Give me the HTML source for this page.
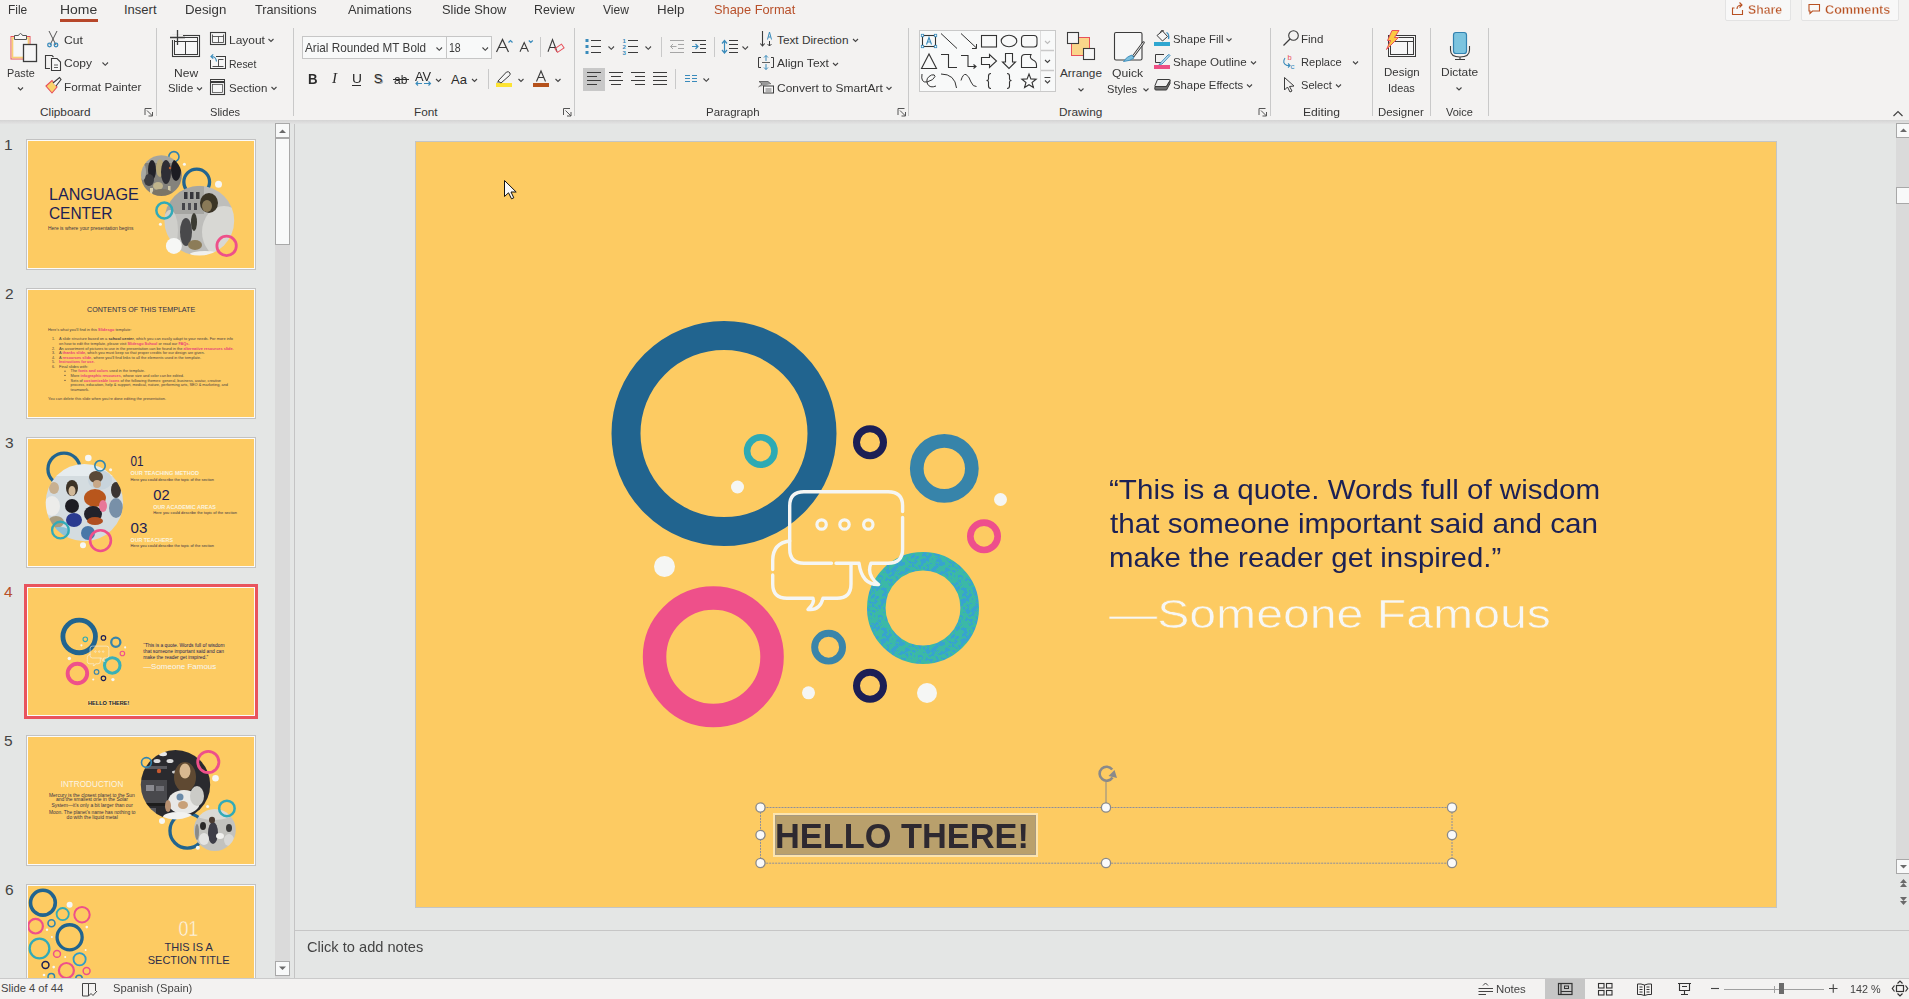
<!DOCTYPE html>
<html><head><meta charset="utf-8"><style>
html,body{margin:0;padding:0;width:1909px;height:999px;overflow:hidden;background:#f3f2f1;font-family:'Liberation Sans',sans-serif;}
.tx{position:absolute;white-space:nowrap;line-height:1;transform-origin:0 0;}
svg{overflow:visible}
</style></head><body>
<div style="position:absolute;left:0px;top:0px;width:1909px;height:120px;background:#f3f2f1;"></div>
<div style="position:absolute;left:0px;top:120px;width:1909px;height:4px;background:linear-gradient(#d4d4d4,#e3e3e3);"></div>
<div style="position:absolute;left:0px;top:124px;width:1909px;height:854px;background:#e4e6e5;"></div>
<div style="position:absolute;left:294px;top:124px;width:1px;height:854px;background:#cfcfcf;"></div>
<div style="position:absolute;left:0px;top:978px;width:1909px;height:21px;background:#f3f2f1;"></div>
<div style="position:absolute;left:0px;top:978px;width:1909px;height:1px;background:#cacaca;"></div>
<div style="position:absolute;left:295px;top:930px;width:1614px;height:1px;background:#c6c6c6;"></div>
<div id="t1" class="tx" style="transform:scaleX(1.0087);left:307.00px;top:940px;font-size:14.5px;color:#444;font-weight:normal;font-family:'Liberation Sans',sans-serif;">Click to add notes</div>
<div style="position:absolute;left:415px;top:141px;width:1362px;height:767px;background:#fdcb62;border:1px solid #c3c5c6;box-sizing:border-box;"></div>
<svg style="position:absolute;left:0px;top:0px;pointer-events:none" width="1909" height="999" viewBox="0 0 1909 999"><circle cx="724" cy="433.5" r="98.0" fill="none" stroke="#21648f" stroke-width="29.0"/><circle cx="760.8" cy="451" r="13.7" fill="none" stroke="#2eaab4" stroke-width="6.6"/><circle cx="737.5" cy="487" r="6.5" fill="#f5f6f4"/><circle cx="870" cy="442.3" r="13.5" fill="none" stroke="#1c1f55" stroke-width="7"/><circle cx="944.3" cy="468.4" r="27.549999999999997" fill="none" stroke="#3784aa" stroke-width="13.7"/><circle cx="1000.5" cy="499.5" r="6.5" fill="#f5f6f4"/><circle cx="984" cy="536.3" r="13.675" fill="none" stroke="#ee4f8c" stroke-width="6.65"/><circle cx="713.3" cy="656.8" r="58.75" fill="none" stroke="#ee508a" stroke-width="23.5"/><circle cx="664.5" cy="566.5" r="10.5" fill="#f5f6f4"/><pattern id="tealpat" patternUnits="userSpaceOnUse" width="40" height="40"><rect width="40" height="40" fill="#3bb9a6"/><path d="M0 0h9v1h-9zM16 0h6v1h-6zM27 0h1v1h-1zM34 0h3v1h-3zM1 1h5v1h-5zM8 1h1v1h-1zM16 1h6v1h-6zM28 1h3v1h-3zM35 1h3v1h-3zM1 2h5v1h-5zM15 2h1v1h-1zM19 2h6v1h-6zM29 2h8v1h-8zM1 3h3v1h-3zM10 3h2v1h-2zM16 3h2v1h-2zM19 3h6v1h-6zM30 3h1v1h-1zM32 3h1v1h-1zM34 3h2v1h-2zM1 4h2v1h-2zM7 4h1v1h-1zM9 4h1v1h-1zM15 4h10v1h-10zM32 4h2v1h-2zM0 5h3v1h-3zM6 5h3v1h-3zM16 5h2v1h-2zM19 5h4v1h-4zM29 5h1v1h-1zM32 5h2v1h-2zM38 5h2v1h-2zM0 6h1v1h-1zM7 6h2v1h-2zM14 6h5v1h-5zM28 6h3v1h-3zM32 6h3v1h-3zM38 6h2v1h-2zM0 7h1v1h-1zM3 7h2v1h-2zM8 7h1v1h-1zM13 7h5v1h-5zM26 7h1v1h-1zM35 7h2v1h-2zM39 7h1v1h-1zM0 8h1v1h-1zM3 8h2v1h-2zM7 8h2v1h-2zM12 8h5v1h-5zM25 8h4v1h-4zM36 8h2v1h-2zM39 8h1v1h-1zM4 9h1v1h-1zM6 9h3v1h-3zM11 9h5v1h-5zM25 9h5v1h-5zM5 10h5v1h-5zM11 10h6v1h-6zM18 10h1v1h-1zM25 10h6v1h-6zM32 10h3v1h-3zM37 10h1v1h-1zM6 11h8v1h-8zM15 11h1v1h-1zM17 11h1v1h-1zM21 11h2v1h-2zM24 11h4v1h-4zM32 11h4v1h-4zM3 12h2v1h-2zM6 12h4v1h-4zM12 12h3v1h-3zM20 12h6v1h-6zM34 12h1v1h-1zM7 13h2v1h-2zM12 13h3v1h-3zM17 13h1v1h-1zM19 13h6v1h-6zM26 13h2v1h-2zM30 13h2v1h-2zM11 14h3v1h-3zM18 14h4v1h-4zM25 14h3v1h-3zM30 14h2v1h-2zM0 15h2v1h-2zM8 15h6v1h-6zM26 15h3v1h-3zM31 15h1v1h-1zM34 15h1v1h-1zM38 15h2v1h-2zM0 16h3v1h-3zM9 16h2v1h-2zM15 16h2v1h-2zM27 16h1v1h-1zM34 16h1v1h-1zM38 16h2v1h-2zM2 17h1v1h-1zM6 17h1v1h-1zM16 17h2v1h-2zM21 17h1v1h-1zM27 17h1v1h-1zM38 17h1v1h-1zM2 18h1v1h-1zM6 18h2v1h-2zM16 18h2v1h-2zM21 18h5v1h-5zM31 18h1v1h-1zM1 19h1v1h-1zM5 19h8v1h-8zM17 19h2v1h-2zM23 19h3v1h-3zM38 19h1v1h-1zM0 20h1v1h-1zM5 20h2v1h-2zM9 20h4v1h-4zM16 20h3v1h-3zM22 20h2v1h-2zM37 20h1v1h-1zM39 20h1v1h-1zM0 21h1v1h-1zM10 21h2v1h-2zM14 21h5v1h-5zM22 21h2v1h-2zM38 21h2v1h-2zM0 22h1v1h-1zM11 22h1v1h-1zM15 22h3v1h-3zM21 22h3v1h-3zM36 22h2v1h-2zM8 23h1v1h-1zM11 23h2v1h-2zM16 23h2v1h-2zM21 23h3v1h-3zM31 23h3v1h-3zM35 23h4v1h-4zM1 24h1v1h-1zM9 24h4v1h-4zM17 24h1v1h-1zM21 24h3v1h-3zM33 24h5v1h-5zM0 25h1v1h-1zM9 25h2v1h-2zM20 25h2v1h-2zM23 25h3v1h-3zM30 25h3v1h-3zM34 25h2v1h-2zM38 25h1v1h-1zM19 26h6v1h-6zM29 26h4v1h-4zM34 26h2v1h-2zM38 26h2v1h-2zM3 27h1v1h-1zM12 27h3v1h-3zM18 27h6v1h-6zM25 27h1v1h-1zM32 27h8v1h-8zM1 28h6v1h-6zM12 28h3v1h-3zM18 28h2v1h-2zM21 28h2v1h-2zM24 28h1v1h-1zM26 28h1v1h-1zM32 28h3v1h-3zM36 28h4v1h-4zM1 29h5v1h-5zM13 29h3v1h-3zM17 29h1v1h-1zM23 29h7v1h-7zM32 29h1v1h-1zM36 29h3v1h-3zM3 30h4v1h-4zM9 30h1v1h-1zM13 30h6v1h-6zM23 30h3v1h-3zM28 30h3v1h-3zM32 30h2v1h-2zM36 30h2v1h-2zM4 31h3v1h-3zM9 31h2v1h-2zM13 31h8v1h-8zM23 31h2v1h-2zM27 31h4v1h-4zM32 31h1v1h-1zM34 31h1v1h-1zM4 32h4v1h-4zM13 32h1v1h-1zM15 32h6v1h-6zM28 32h4v1h-4zM34 32h1v1h-1zM3 33h4v1h-4zM9 33h2v1h-2zM14 33h7v1h-7zM29 33h2v1h-2zM2 34h4v1h-4zM9 34h3v1h-3zM14 34h6v1h-6zM23 34h2v1h-2zM29 34h2v1h-2zM33 34h2v1h-2zM2 35h5v1h-5zM8 35h4v1h-4zM15 35h5v1h-5zM23 35h3v1h-3zM32 35h3v1h-3zM2 36h1v1h-1zM5 36h6v1h-6zM18 36h2v1h-2zM24 36h1v1h-1zM31 36h4v1h-4zM36 36h3v1h-3zM6 37h4v1h-4zM15 37h4v1h-4zM27 37h1v1h-1zM31 37h3v1h-3zM36 37h3v1h-3zM3 38h2v1h-2zM6 38h3v1h-3zM12 38h1v1h-1zM18 38h3v1h-3zM27 38h1v1h-1zM31 38h1v1h-1zM35 38h3v1h-3zM1 39h8v1h-8zM12 39h1v1h-1zM16 39h5v1h-5zM26 39h1v1h-1zM35 39h1v1h-1z" fill="#37a3cf"/></pattern><circle cx="923" cy="608" r="46.7" fill="none" stroke="url(#tealpat)" stroke-width="18.6"/><circle cx="828.6" cy="647.2" r="13.95" fill="none" stroke="#3a85aa" stroke-width="6.899999999999999"/><circle cx="870" cy="685.7" r="13.5" fill="none" stroke="#1c1f55" stroke-width="7"/><circle cx="808.5" cy="692.8" r="6.5" fill="#f5f6f4"/><circle cx="927" cy="693" r="10" fill="#f5f6f4"/><path d="M789.7 541 Q773 543 772.7 560 L772.7 569.5 M772.7 575 L772.7 584 Q772.7 598.2 787 598.2 L813 598.2 Q815 603 808 609.5 Q820 611 823 598.2 L837 598.2 Q851 598.2 851 584 L851 564.8" fill="none" stroke="#f5f6f4" stroke-width="3.4" stroke-linecap="round" stroke-linejoin="round"/><path d="M831.5 563.2 L804 563.2 Q789.7 563.2 789.7 549 L789.7 505.7 Q789.7 491.7 804 491.7 L888 491.7 Q902.6 491.7 902.6 505.7 L902.6 511.5 M902.6 517.5 L902.6 549 Q902.6 563.2 888 563.2 L871 563.2 Q866 575 878.5 584.5 Q862 585 859 563.2 L836 563.2" fill="none" stroke="#f5f6f4" stroke-width="3.4" stroke-linecap="round" stroke-linejoin="round"/><circle cx="821.6" cy="524.5" r="4.7" fill="none" stroke="#f5f6f4" stroke-width="3.2"/><circle cx="844.5" cy="524.5" r="4.7" fill="none" stroke="#f5f6f4" stroke-width="3.2"/><circle cx="868.3" cy="524.5" r="4.7" fill="none" stroke="#f5f6f4" stroke-width="3.2"/></svg>
<div id="t2" class="tx" style="transform:scaleX(1.0382);left:1108.86px;top:475px;font-size:28.5px;color:#1c2155;font-weight:normal;font-family:'Liberation Sans',sans-serif;">&#8220;This is a quote. Words full of wisdom</div>
<div id="t3" class="tx" style="transform:scaleX(1.0407);left:1110.00px;top:509px;font-size:28.5px;color:#1c2155;font-weight:normal;font-family:'Liberation Sans',sans-serif;">that someone important said and can</div>
<div id="t4" class="tx" style="transform:scaleX(1.0317);left:1108.82px;top:543px;font-size:28.5px;color:#1c2155;font-weight:normal;font-family:'Liberation Sans',sans-serif;">make the reader get inspired.&#8221;</div>
<div id="t5" class="tx" style="transform:scaleX(1.1609);left:1109.00px;top:593px;font-size:41.5px;color:#f7f7f4;font-weight:normal;font-family:'Liberation Sans',sans-serif;-webkit-text-stroke:0.6px #fdcb62;">&#8212;Someone Famous</div>
<div style="position:absolute;left:773px;top:813px;width:265px;height:44px;background:#b9a06c;border:2px solid #fbe4b0;box-sizing:border-box;box-shadow:inset 0 0 0 1px #a89a80;"></div>
<div id="t6" class="tx" style="transform:scaleX(0.9960);left:775.41px;top:819px;font-size:34.5px;color:#2e2930;font-weight:bold;font-family:'Liberation Sans',sans-serif;">HELLO THERE!</div>
<svg style="position:absolute;left:0px;top:0px;pointer-events:none" width="1909" height="999" viewBox="0 0 1909 999"><rect x="760.5" y="807.5" width="691.5" height="55.7" fill="none" stroke="#8c8e9c" stroke-width="1" stroke-dasharray="2,1"/><line x1="1106" y1="780" x2="1106" y2="807" stroke="#8a8a8a" stroke-width="1"/><circle cx="760.5" cy="807.5" r="4.6" fill="#fafafa" stroke="#8a8a8a" stroke-width="1.3"/><circle cx="1106" cy="807.5" r="4.6" fill="#fafafa" stroke="#8a8a8a" stroke-width="1.3"/><circle cx="1452" cy="807.5" r="4.6" fill="#fafafa" stroke="#8a8a8a" stroke-width="1.3"/><circle cx="760.5" cy="835" r="4.6" fill="#fafafa" stroke="#8a8a8a" stroke-width="1.3"/><circle cx="1452" cy="835" r="4.6" fill="#fafafa" stroke="#8a8a8a" stroke-width="1.3"/><circle cx="760.5" cy="863" r="4.6" fill="#fafafa" stroke="#8a8a8a" stroke-width="1.3"/><circle cx="1106" cy="863" r="4.6" fill="#fafafa" stroke="#8a8a8a" stroke-width="1.3"/><circle cx="1452" cy="863" r="4.6" fill="#fafafa" stroke="#8a8a8a" stroke-width="1.3"/><path d="M1112.2 769.5 A7 7 0 1 0 1112.5 777.5" fill="none" stroke="#8a8a8a" stroke-width="2.6"/><path d="M1108.5 776 L1117 778 L1114.5 770" fill="#8a8a8a"/></svg>
<div id="t7" class="tx" style="transform:scaleX(0.9200);left:8.35px;top:3px;font-size:13px;color:#363636;font-weight:normal;font-family:'Liberation Sans',sans-serif;">File</div>
<div id="t8" class="tx" style="transform:scaleX(1.0735);left:60.26px;top:3px;font-size:13px;color:#363636;font-weight:normal;font-family:'Liberation Sans',sans-serif;">Home</div>
<div id="t9" class="tx" style="transform:scaleX(1.0000);left:124.00px;top:3px;font-size:13px;color:#363636;font-weight:normal;font-family:'Liberation Sans',sans-serif;">Insert</div>
<div id="t10" class="tx" style="transform:scaleX(1.0205);left:184.92px;top:3px;font-size:13px;color:#363636;font-weight:normal;font-family:'Liberation Sans',sans-serif;">Design</div>
<div id="t11" class="tx" style="transform:scaleX(0.9778);left:255.00px;top:3px;font-size:13px;color:#363636;font-weight:normal;font-family:'Liberation Sans',sans-serif;">Transitions</div>
<div id="t12" class="tx" style="transform:scaleX(0.9891);left:348.00px;top:3px;font-size:13px;color:#363636;font-weight:normal;font-family:'Liberation Sans',sans-serif;">Animations</div>
<div id="t13" class="tx" style="transform:scaleX(0.9891);left:441.82px;top:3px;font-size:13px;color:#363636;font-weight:normal;font-family:'Liberation Sans',sans-serif;">Slide Show</div>
<div id="t14" class="tx" style="transform:scaleX(0.9524);left:534.12px;top:3px;font-size:13px;color:#363636;font-weight:normal;font-family:'Liberation Sans',sans-serif;">Review</div>
<div id="t15" class="tx" style="transform:scaleX(0.9276);left:603.12px;top:3px;font-size:13px;color:#363636;font-weight:normal;font-family:'Liberation Sans',sans-serif;">View</div>
<div id="t16" class="tx" style="transform:scaleX(1.0269);left:657.14px;top:3px;font-size:13px;color:#363636;font-weight:normal;font-family:'Liberation Sans',sans-serif;">Help</div>
<div id="t17" class="tx" style="transform:scaleX(0.9866);left:714.40px;top:3px;font-size:13px;color:#b8502a;font-weight:normal;font-family:'Liberation Sans',sans-serif;">Shape Format</div>
<div style="position:absolute;left:60px;top:19px;width:38px;height:3px;background:#b7472a;"></div>
<div style="position:absolute;left:1725px;top:-2px;width:66px;height:23px;background:#f8f8f8;border:1px solid #e3e3e3;border-radius:2px;box-sizing:border-box;"></div>
<div style="position:absolute;left:1801px;top:-2px;width:98px;height:23px;background:#f8f8f8;border:1px solid #e3e3e3;border-radius:2px;box-sizing:border-box;"></div>
<div id="t18" class="tx" style="transform:scaleX(0.9444);left:1748.00px;top:3px;font-size:13px;color:#b85122;font-weight:bold;font-family:'Liberation Sans',sans-serif;-webkit-text-stroke:0.35px #f8f8f8;">Share</div>
<div id="t19" class="tx" style="transform:scaleX(0.9731);left:1824.52px;top:3px;font-size:13px;color:#b85122;font-weight:bold;font-family:'Liberation Sans',sans-serif;-webkit-text-stroke:0.35px #f8f8f8;">Comments</div>
<div id="t20" class="tx" style="transform:scaleX(1.0000);left:40.00px;top:107px;font-size:11.8px;color:#363636;font-weight:normal;font-family:'Liberation Sans',sans-serif;">Clipboard</div>
<div id="t21" class="tx" style="transform:scaleX(0.9375);left:210.00px;top:107px;font-size:11.8px;color:#363636;font-weight:normal;font-family:'Liberation Sans',sans-serif;">Slides</div>
<div id="t22" class="tx" style="transform:scaleX(1.0000);left:414.00px;top:107px;font-size:11.8px;color:#363636;font-weight:normal;font-family:'Liberation Sans',sans-serif;">Font</div>
<div id="t23" class="tx" style="transform:scaleX(0.9722);left:706.06px;top:107px;font-size:11.8px;color:#363636;font-weight:normal;font-family:'Liberation Sans',sans-serif;">Paragraph</div>
<div id="t24" class="tx" style="transform:scaleX(1.0000);left:1059.00px;top:107px;font-size:11.8px;color:#363636;font-weight:normal;font-family:'Liberation Sans',sans-serif;">Drawing</div>
<div id="t25" class="tx" style="transform:scaleX(1.0286);left:1302.94px;top:107px;font-size:11.8px;color:#363636;font-weight:normal;font-family:'Liberation Sans',sans-serif;">Editing</div>
<div id="t26" class="tx" style="transform:scaleX(0.9681);left:1378.03px;top:107px;font-size:11.8px;color:#363636;font-weight:normal;font-family:'Liberation Sans',sans-serif;">Designer</div>
<div id="t27" class="tx" style="transform:scaleX(0.9310);left:1446.00px;top:107px;font-size:11.8px;color:#363636;font-weight:normal;font-family:'Liberation Sans',sans-serif;">Voice</div>
<div id="t28" class="tx" style="transform:scaleX(0.9167);left:7.10px;top:68px;font-size:11.8px;color:#363636;font-weight:normal;font-family:'Liberation Sans',sans-serif;">Paste</div>
<div id="t29" class="tx" style="transform:scaleX(1.0278);left:63.95px;top:35px;font-size:11.8px;color:#363636;font-weight:normal;font-family:'Liberation Sans',sans-serif;">Cut</div>
<div id="t30" class="tx" style="transform:scaleX(1.0185);left:63.96px;top:58px;font-size:11.8px;color:#363636;font-weight:normal;font-family:'Liberation Sans',sans-serif;">Copy</div>
<div id="t31" class="tx" style="transform:scaleX(0.9936);left:63.99px;top:82px;font-size:11.8px;color:#363636;font-weight:normal;font-family:'Liberation Sans',sans-serif;">Format Painter</div>
<div id="t32" class="tx" style="transform:scaleX(1.0217);left:173.94px;top:68px;font-size:11.8px;color:#363636;font-weight:normal;font-family:'Liberation Sans',sans-serif;">New</div>
<div id="t33" class="tx" style="transform:scaleX(0.9615);left:168.00px;top:83px;font-size:11.8px;color:#363636;font-weight:normal;font-family:'Liberation Sans',sans-serif;">Slide</div>
<div id="t34" class="tx" style="transform:scaleX(1.0143);left:228.96px;top:35px;font-size:11.8px;color:#363636;font-weight:normal;font-family:'Liberation Sans',sans-serif;">Layout</div>
<div id="t35" class="tx" style="transform:scaleX(0.8871);left:229.17px;top:59px;font-size:11.8px;color:#363636;font-weight:normal;font-family:'Liberation Sans',sans-serif;">Reset</div>
<div id="t36" class="tx" style="transform:scaleX(0.9744);left:229.00px;top:83px;font-size:11.8px;color:#363636;font-weight:normal;font-family:'Liberation Sans',sans-serif;">Section</div>
<div style="position:absolute;left:302px;top:36px;width:145px;height:22.5px;background:#f8f9f9;border:1px solid #c6c6c6;box-sizing:border-box;"></div>
<div style="position:absolute;left:446px;top:36px;width:46px;height:22.5px;background:#f8f9f9;border:1px solid #c6c6c6;box-sizing:border-box;"></div>
<div id="t37" class="tx" style="transform:scaleX(0.9167);left:305.00px;top:42px;font-size:12.8px;color:#3a3a3a;font-weight:normal;font-family:'Liberation Sans',sans-serif;">Arial Rounded MT Bold</div>
<div id="t38" class="tx" style="transform:scaleX(0.8214);left:449.22px;top:42px;font-size:12.8px;color:#3a3a3a;font-weight:normal;font-family:'Liberation Sans',sans-serif;">18</div>
<div id="t39" class="tx" style="transform:scaleX(0.9444);left:308.14px;top:72px;font-size:14px;color:#2b2b2b;font-weight:bold;font-family:'Liberation Sans',sans-serif;">B</div>
<div id="t40" class="tx" style="transform:scaleX(1.0833);left:332.08px;top:72px;font-size:14px;color:#2b2b2b;font-weight:normal;font-family:'Liberation Serif',sans-serif;font-style:italic;">I</div>
<div id="t41" class="tx" style="transform:scaleX(1.0625);left:351.85px;top:72px;font-size:13px;color:#2b2b2b;font-weight:normal;font-family:'Liberation Sans',sans-serif;">U</div>
<div id="t42" class="tx" style="transform:scaleX(1.0000);left:374.86px;top:73px;font-size:13px;color:#999;font-weight:normal;font-family:'Liberation Sans',sans-serif;">S</div>
<div id="t43" class="tx" style="transform:scaleX(1.0000);left:373.86px;top:72px;font-size:13px;color:#2b2b2b;font-weight:normal;font-family:'Liberation Sans',sans-serif;">S</div>
<div id="t44" class="tx" style="transform:scaleX(0.9643);left:394.00px;top:74px;font-size:12.5px;color:#2b2b2b;font-weight:normal;font-family:'Liberation Sans',sans-serif;">ab</div>
<div id="t45" class="tx" style="transform:scaleX(1.0667);left:415.00px;top:71px;font-size:12px;color:#2b2b2b;font-weight:normal;font-family:'Liberation Sans',sans-serif;">AV</div>
<div id="t46" class="tx" style="transform:scaleX(1.0000);left:451.00px;top:73px;font-size:13px;color:#2b2b2b;font-weight:normal;font-family:'Liberation Sans',sans-serif;">Aa</div>
<div style="position:absolute;left:496px;top:83px;width:16px;height:3.7px;background:#fde333;"></div>
<div style="position:absolute;left:533px;top:83px;width:16px;height:3.7px;background:#b5521c;"></div>
<div style="position:absolute;left:583px;top:68px;width:22px;height:23px;background:#c8c8c8;"></div>
<div id="t47" class="tx" style="transform:scaleX(1.0000);left:777.00px;top:35px;font-size:11.8px;color:#363636;font-weight:normal;font-family:'Liberation Sans',sans-serif;">Text Direction</div>
<div id="t48" class="tx" style="transform:scaleX(1.0196);left:777.00px;top:58px;font-size:11.8px;color:#363636;font-weight:normal;font-family:'Liberation Sans',sans-serif;">Align Text</div>
<div id="t49" class="tx" style="transform:scaleX(1.0144);left:776.96px;top:83px;font-size:11.8px;color:#363636;font-weight:normal;font-family:'Liberation Sans',sans-serif;">Convert to SmartArt</div>
<div style="position:absolute;left:918.5px;top:30px;width:137px;height:62px;background:#f8f9f9;border:1px solid #c9c9c9;box-sizing:border-box;"></div>
<div id="t50" class="tx" style="transform:scaleX(1.0000);left:1060.00px;top:68px;font-size:11.8px;color:#363636;font-weight:normal;font-family:'Liberation Sans',sans-serif;">Arrange</div>
<div id="t51" class="tx" style="transform:scaleX(1.0333);left:1112.00px;top:68px;font-size:11.8px;color:#363636;font-weight:normal;font-family:'Liberation Sans',sans-serif;">Quick</div>
<div id="t52" class="tx" style="transform:scaleX(0.9375);left:1107.00px;top:84px;font-size:11.8px;color:#363636;font-weight:normal;font-family:'Liberation Sans',sans-serif;">Styles</div>
<div style="position:absolute;left:1154px;top:42px;width:16px;height:4px;background:#2fa6d0;"></div>
<div id="t53" class="tx" style="transform:scaleX(0.9615);left:1173.00px;top:34px;font-size:11.8px;color:#363636;font-weight:normal;font-family:'Liberation Sans',sans-serif;">Shape Fill</div>
<div style="position:absolute;left:1154px;top:65px;width:16px;height:4px;background:#ec4f84;"></div>
<div id="t54" class="tx" style="transform:scaleX(0.9867);left:1173.00px;top:57px;font-size:11.8px;color:#363636;font-weight:normal;font-family:'Liberation Sans',sans-serif;">Shape Outline</div>
<div id="t55" class="tx" style="transform:scaleX(0.9589);left:1173.00px;top:80px;font-size:11.8px;color:#363636;font-weight:normal;font-family:'Liberation Sans',sans-serif;">Shape Effects</div>
<div id="t56" class="tx" style="transform:scaleX(0.9773);left:1301.03px;top:34px;font-size:11.8px;color:#363636;font-weight:normal;font-family:'Liberation Sans',sans-serif;">Find</div>
<div id="t57" class="tx" style="transform:scaleX(0.9419);left:1301.07px;top:57px;font-size:11.8px;color:#363636;font-weight:normal;font-family:'Liberation Sans',sans-serif;">Replace</div>
<div id="t58" class="tx" style="transform:scaleX(0.9394);left:1301.00px;top:80px;font-size:11.8px;color:#363636;font-weight:normal;font-family:'Liberation Sans',sans-serif;">Select</div>
<div id="t59" class="tx" style="transform:scaleX(0.9722);left:1384.01px;top:67px;font-size:11.8px;color:#363636;font-weight:normal;font-family:'Liberation Sans',sans-serif;">Design</div>
<div id="t60" class="tx" style="transform:scaleX(0.9286);left:1388.12px;top:83px;font-size:11.8px;color:#363636;font-weight:normal;font-family:'Liberation Sans',sans-serif;">Ideas</div>
<div id="t61" class="tx" style="transform:scaleX(1.0139);left:1440.96px;top:67px;font-size:11.8px;color:#363636;font-weight:normal;font-family:'Liberation Sans',sans-serif;">Dictate</div>
<svg style="position:absolute;left:0px;top:0px;" width="1909" height="125" viewBox="0 0 1909 125"><line x1="156.5" y1="28" x2="156.5" y2="116" stroke="#c9c9c9" stroke-width="1"/><line x1="293.5" y1="28" x2="293.5" y2="116" stroke="#c9c9c9" stroke-width="1"/><line x1="574.5" y1="28" x2="574.5" y2="116" stroke="#c9c9c9" stroke-width="1"/><line x1="908.5" y1="28" x2="908.5" y2="116" stroke="#c9c9c9" stroke-width="1"/><line x1="1270.5" y1="28" x2="1270.5" y2="116" stroke="#c9c9c9" stroke-width="1"/><line x1="1372.5" y1="28" x2="1372.5" y2="116" stroke="#c9c9c9" stroke-width="1"/><line x1="1430.5" y1="28" x2="1430.5" y2="116" stroke="#c9c9c9" stroke-width="1"/><line x1="1488.5" y1="28" x2="1488.5" y2="116" stroke="#c9c9c9" stroke-width="1"/><path d="M145.0 115 V108.5 H151.5" fill="none" stroke="#555" stroke-width="1"/><path d="M147.0 110.5 L152.5 116 M152.5 112 V116 H148.5" fill="none" stroke="#555" stroke-width="1"/><path d="M563.5 115 V108.5 H570" fill="none" stroke="#555" stroke-width="1"/><path d="M565.5 110.5 L571 116 M571 112 V116 H567" fill="none" stroke="#555" stroke-width="1"/><path d="M898.0 115 V108.5 H904.5" fill="none" stroke="#555" stroke-width="1"/><path d="M900.0 110.5 L905.5 116 M905.5 112 V116 H901.5" fill="none" stroke="#555" stroke-width="1"/><path d="M1259.0 115 V108.5 H1265.5" fill="none" stroke="#555" stroke-width="1"/><path d="M1261.0 110.5 L1266.5 116 M1266.5 112 V116 H1262.5" fill="none" stroke="#555" stroke-width="1"/><rect x="11" y="36.5" width="19" height="22.5" fill="#f6f6f6" stroke="#e8505b" stroke-width="1"/><rect x="12.5" y="38" width="16" height="19.5" fill="none" stroke="#f8cf74" stroke-width="1.6"/><path d="M14.5 39.5 V35.5 H18.5 Q20.5 31.5 22.5 35.5 H26.5 V39.5 Z" fill="#f6f6f6" stroke="#555" stroke-width="1"/><rect x="23.5" y="44.5" width="13" height="17" fill="#f6f6f6" stroke="#3b3b3b" stroke-width="1.3"/><path d="M18 87.5 L20.5 90.0 L23 87.5" fill="none" stroke="#444" stroke-width="1.1"/><path d="M49 31 L56 45 M57 31 L50 45" stroke="#555" stroke-width="1" fill="none"/><circle cx="49.5" cy="45" r="1.8" fill="none" stroke="#3a8bbb" stroke-width="1.3"/><circle cx="56" cy="45" r="1.8" fill="none" stroke="#3a8bbb" stroke-width="1.3"/><path d="M50 68.5 H45.5 V55.5 H52 L53.5 57" fill="none" stroke="#3b3b3b" stroke-width="1.1"/><path d="M51.5 58.5 H57 L60.5 62 V70.5 H51.5 Z" fill="#f6f6f6" stroke="#3b3b3b" stroke-width="1.1"/><path d="M54 65 H58 M54 67.5 H58" stroke="#3b3b3b" stroke-width="0.8"/><path d="M102.5 62.5 L105.25 65.3 L108.0 62.5" fill="none" stroke="#444" stroke-width="1.1"/><path d="M46 86 L52 80.5 L57 87 L52 93 Z" fill="#f9d36b" stroke="#e8505b" stroke-width="1.1"/><path d="M53 83 L59.5 77.5 L61 79.5 L56 86" fill="#f6f6f6" stroke="#3b3b3b" stroke-width="1.1"/><rect x="172.5" y="35.5" width="27" height="21" fill="#f6f6f6" stroke="#3b3b3b" stroke-width="1.1"/><rect x="174.5" y="37.5" width="23" height="17" fill="none" stroke="#3b3b3b" stroke-width="1"/><path d="M174.5 41.5 H197.5 M185.5 41.5 V54.5" stroke="#3b3b3b" stroke-width="1"/><rect x="170" y="35" width="13" height="5" fill="#f3f2f1"/><path d="M177.5 30 V45 M170 37.5 H185" stroke="#3b3b3b" stroke-width="1.3"/><path d="M197 87.5 L199.5 90.0 L202 87.5" fill="none" stroke="#444" stroke-width="1.1"/><rect x="210.5" y="32.5" width="15" height="12" fill="#f6f6f6" stroke="#3b3b3b" stroke-width="1.1"/><path d="M212.5 36.5 H223.5 M218.5 36.5 V42.5 M212.5 42.5 H223.5 M212.5 34.5 V42.5 M223.5 34.5 V42.5" stroke="#3b3b3b" stroke-width="0.8" fill="none"/><path d="M268.5 39 L271.0 41.5 L273.5 39" fill="none" stroke="#444" stroke-width="1.1"/><rect x="210.5" y="56.5" width="15" height="12" fill="#f6f6f6" stroke="#3b3b3b" stroke-width="1"/><path d="M212.5 66.5 H223.5 M218.5 59.5 H223.5 M218.5 59.5 V66.5" stroke="#3b3b3b" stroke-width="0.9" fill="none"/><rect x="209" y="54" width="7" height="6" fill="#f3f2f1"/><path d="M216.5 61.5 Q216 56.2 211 56.5 M213.2 54.3 L211 56.5 L213.2 58.7" fill="none" stroke="#3a8bbb" stroke-width="1.2"/><rect x="210.5" y="79.5" width="14" height="2" fill="none" stroke="#3b3b3b" stroke-width="1"/><rect x="210.5" y="82.5" width="14" height="12" fill="#f6f6f6" stroke="#3b3b3b" stroke-width="1.1"/><rect x="212.5" y="84.5" width="10" height="8" fill="none" stroke="#3b3b3b" stroke-width="0.7"/><path d="M271.5 87 L274.0 89.5 L276.5 87" fill="none" stroke="#444" stroke-width="1.1"/><path d="M436.5 47.5 L439.25 50.3 L442.0 47.5" fill="none" stroke="#444" stroke-width="1.1"/><path d="M482.5 47.5 L485.25 50.3 L488.0 47.5" fill="none" stroke="#444" stroke-width="1.1"/><path d="M496.5 52 L502.5 39.5 L508.5 52 M498.5 47.5 H506.5" fill="none" stroke="#3b3b3b" stroke-width="1.2"/><path d="M508.5 42.5 L510.5 40.5 L512.5 42.5" fill="none" stroke="#3a8bbb" stroke-width="1.2"/><path d="M520 51.8 L524.2 42.5 L528.4 51.8 M521.5 48.5 H527" fill="none" stroke="#3b3b3b" stroke-width="1.1"/><path d="M528.8 40.5 L530.8 42.5 L532.8 40.5" fill="none" stroke="#3a8bbb" stroke-width="1.2"/><line x1="540.5" y1="37" x2="540.5" y2="57" stroke="#c9c9c9" stroke-width="1"/><path d="M548 51.8 L552.5 39.5 L557 51.8 M549.8 47.5 H555.2" fill="none" stroke="#3b3b3b" stroke-width="1.1"/><rect x="555.5" y="46" width="8" height="4.5" transform="rotate(-35 559.5 48.25)" fill="none" stroke="#e8505b" stroke-width="1"/><line x1="352" y1="85.5" x2="361" y2="85.5" stroke="#2b2b2b" stroke-width="1"/><line x1="393" y1="79.5" x2="409" y2="79.5" stroke="#2b2b2b" stroke-width="1"/><path d="M416 83.5 H422 M418 81.5 L416 83.5 L418 85.5 M424 83.5 H430.5 M428.5 81.5 L430.5 83.5 L428.5 85.5" fill="none" stroke="#3a8bbb" stroke-width="1.1"/><path d="M436 79 L438.5 81.5 L441 79" fill="none" stroke="#444" stroke-width="1.1"/><path d="M472 79 L474.5 81.5 L477 79" fill="none" stroke="#444" stroke-width="1.1"/><line x1="488.5" y1="69" x2="488.5" y2="89" stroke="#c9c9c9" stroke-width="1"/><path d="M498 81 L506.5 72 Q508.5 71 510 73 Q510.5 74.5 509.5 75.5 L501 83 Z" fill="#f6f6f6" stroke="#3b3b3b" stroke-width="1"/><path d="M498 81 L496.5 82.5 L500 82.5 L501 83" fill="#555"/><path d="M518.5 79 L521.0 81.5 L523.5 79" fill="none" stroke="#444" stroke-width="1.1"/><path d="M536.5 81.5 L541 71 L545.5 81.5 M538 77.5 H544" fill="none" stroke="#3b3b3b" stroke-width="1.1"/><path d="M555.5 79 L558.0 81.5 L560.5 79" fill="none" stroke="#444" stroke-width="1.1"/><rect x="585.5" y="39.0" width="3" height="3" fill="#3a8bbb"/><line x1="591" y1="40.5" x2="601" y2="40.5" stroke="#3b3b3b" stroke-width="1"/><rect x="585.5" y="45.0" width="3" height="3" fill="#3a8bbb"/><line x1="591" y1="46.5" x2="601" y2="46.5" stroke="#3b3b3b" stroke-width="1"/><rect x="585.5" y="51.0" width="3" height="3" fill="#3a8bbb"/><line x1="591" y1="52.5" x2="601" y2="52.5" stroke="#3b3b3b" stroke-width="1"/><path d="M608.5 46.5 L611.25 49.3 L614.0 46.5" fill="none" stroke="#444" stroke-width="1.1"/><text x="622.5" y="43.0" font-size="6.2" font-family="Liberation Sans" font-weight="bold" fill="#3a8bbb">1</text><line x1="628" y1="40.5" x2="638" y2="40.5" stroke="#3b3b3b" stroke-width="1"/><text x="622.5" y="49.0" font-size="6.2" font-family="Liberation Sans" font-weight="bold" fill="#3a8bbb">2</text><line x1="628" y1="46.5" x2="638" y2="46.5" stroke="#3b3b3b" stroke-width="1"/><text x="622.5" y="55.0" font-size="6.2" font-family="Liberation Sans" font-weight="bold" fill="#3a8bbb">3</text><line x1="628" y1="52.5" x2="638" y2="52.5" stroke="#3b3b3b" stroke-width="1"/><path d="M645.5 46.5 L648.25 49.3 L651.0 46.5" fill="none" stroke="#444" stroke-width="1.1"/><line x1="661.5" y1="37" x2="661.5" y2="57" stroke="#c9c9c9" stroke-width="1"/><path d="M670 40.5 H684 M678 44.5 H684 M678 48.5 H684 M670 52.5 H684" stroke="#a6a6a6" stroke-width="1"/><path d="M676.5 46.5 H670.5 M673 44 L670.5 46.5 L673 49" fill="none" stroke="#a6a6a6" stroke-width="1"/><path d="M692 40.5 H706 M700 44.5 H706 M700 48.5 H706 M692 52.5 H706" stroke="#3b3b3b" stroke-width="1"/><path d="M692 46.5 H698 M695.5 44 L698 46.5 L695.5 49" fill="none" stroke="#3a8bbb" stroke-width="1.2"/><line x1="714.5" y1="37" x2="714.5" y2="57" stroke="#c9c9c9" stroke-width="1"/><path d="M724.5 41 V52.5 M722 43.5 L724.5 40.5 L727 43.5 M722 50 L724.5 53 L727 50" fill="none" stroke="#3a8bbb" stroke-width="1.2"/><path d="M729 40.5 H738 M729 44.5 H738 M729 48.5 H738 M729 52.5 H738" stroke="#3b3b3b" stroke-width="1"/><path d="M742.5 46.5 L745.25 49.3 L748.0 46.5" fill="none" stroke="#444" stroke-width="1.1"/><line x1="587" y1="72.5" x2="601" y2="72.5" stroke="#3b3b3b" stroke-width="1"/><line x1="587" y1="76.5" x2="597" y2="76.5" stroke="#3b3b3b" stroke-width="1"/><line x1="587" y1="80.5" x2="601" y2="80.5" stroke="#3b3b3b" stroke-width="1"/><line x1="587" y1="84.5" x2="597" y2="84.5" stroke="#3b3b3b" stroke-width="1"/><line x1="609" y1="72.5" x2="623" y2="72.5" stroke="#3b3b3b" stroke-width="1"/><line x1="611" y1="76.5" x2="621" y2="76.5" stroke="#3b3b3b" stroke-width="1"/><line x1="609" y1="80.5" x2="623" y2="80.5" stroke="#3b3b3b" stroke-width="1"/><line x1="611" y1="84.5" x2="621" y2="84.5" stroke="#3b3b3b" stroke-width="1"/><line x1="631" y1="72.5" x2="645" y2="72.5" stroke="#3b3b3b" stroke-width="1"/><line x1="635" y1="76.5" x2="645" y2="76.5" stroke="#3b3b3b" stroke-width="1"/><line x1="631" y1="80.5" x2="645" y2="80.5" stroke="#3b3b3b" stroke-width="1"/><line x1="635" y1="84.5" x2="645" y2="84.5" stroke="#3b3b3b" stroke-width="1"/><line x1="653" y1="72.5" x2="667" y2="72.5" stroke="#3b3b3b" stroke-width="1"/><line x1="653" y1="76.5" x2="667" y2="76.5" stroke="#3b3b3b" stroke-width="1"/><line x1="653" y1="80.5" x2="667" y2="80.5" stroke="#3b3b3b" stroke-width="1"/><line x1="653" y1="84.5" x2="667" y2="84.5" stroke="#3b3b3b" stroke-width="1"/><line x1="675.5" y1="69" x2="675.5" y2="89" stroke="#c9c9c9" stroke-width="1"/><line x1="685" y1="75.5" x2="690" y2="75.5" stroke="#3a8bbb" stroke-width="1"/><line x1="692" y1="75.5" x2="697" y2="75.5" stroke="#3a8bbb" stroke-width="1"/><line x1="685" y1="78.5" x2="690" y2="78.5" stroke="#3a8bbb" stroke-width="1"/><line x1="692" y1="78.5" x2="697" y2="78.5" stroke="#3a8bbb" stroke-width="1"/><line x1="685" y1="81.5" x2="690" y2="81.5" stroke="#3a8bbb" stroke-width="1"/><line x1="692" y1="81.5" x2="697" y2="81.5" stroke="#3a8bbb" stroke-width="1"/><path d="M703.5 78.5 L706.25 81.3 L709.0 78.5" fill="none" stroke="#444" stroke-width="1.1"/><path d="M762.5 31 V46 M760.3 43.5 L762.5 46 L764.7 43.5" fill="none" stroke="#3b3b3b" stroke-width="1.1"/><path d="M767.5 39.5 L769.5 32 L771.5 39.5 M768.3 37 H770.7" fill="none" stroke="#3a8bbb" stroke-width="1"/><path d="M769.5 41 V46 M767.5 44 L769.5 46 L771.5 44" fill="none" stroke="#3b3b3b" stroke-width="1"/><path d="M853 39 L855.5 41.5 L858 39" fill="none" stroke="#444" stroke-width="1.1"/><path d="M761 57.5 H758.5 V67.5 H761 M771 57.5 H773.5 V67.5 H771" fill="none" stroke="#3b3b3b" stroke-width="1"/><path d="M762 62.5 H770" stroke="#3b3b3b" stroke-width="0.8"/><path d="M766 55.5 V61 M764 57.5 L766 55.5 L768 57.5 M766 64 V69.5 M764 67.5 L766 69.5 L768 67.5" fill="none" stroke="#3a8bbb" stroke-width="1"/><path d="M833 63 L835.5 65.5 L838 63" fill="none" stroke="#444" stroke-width="1.1"/><path d="M758.5 87 L762 84 L759 81.5 H768 L771 84" fill="#9a9a9a" stroke="#555" stroke-width="0.8"/><rect x="763.5" y="86" width="10" height="7" fill="#f6f6f6" stroke="#3b3b3b" stroke-width="1"/><path d="M765.5 89 H771.5 M765.5 91 H771.5" stroke="#3b3b3b" stroke-width="0.7"/><path d="M886.5 87 L889.0 89.5 L891.5 87" fill="none" stroke="#444" stroke-width="1.1"/><line x1="1040.5" y1="31" x2="1040.5" y2="91" stroke="#dcdcdc"/><path d="M1041 50.5 H1054 M1041 70.5 H1054" stroke="#c9c9c9" stroke-width="1.5"/><path d="M1045 41 L1047.5 43.5 L1050 41" fill="none" stroke="#bbb" stroke-width="1.1"/><path d="M1045 60 L1047.5 62.5 L1050 60" fill="none" stroke="#444" stroke-width="1.1"/><path d="M1044.5 77.5 H1050.5" stroke="#444" stroke-width="1"/><path d="M1045 80.5 L1047.5 83.0 L1050 80.5" fill="none" stroke="#444" stroke-width="1.1"/><rect x="922.5" y="35.5" width="13" height="11" fill="none" stroke="#333" stroke-width="1.1"/><rect x="921.3" y="34.3" width="2.4" height="2.4" fill="#f8f9f9" stroke="#3a8bbb" stroke-width="0.8"/><rect x="934.3" y="34.3" width="2.4" height="2.4" fill="#f8f9f9" stroke="#3a8bbb" stroke-width="0.8"/><rect x="921.3" y="45.3" width="2.4" height="2.4" fill="#f8f9f9" stroke="#3a8bbb" stroke-width="0.8"/><rect x="934.3" y="45.3" width="2.4" height="2.4" fill="#f8f9f9" stroke="#3a8bbb" stroke-width="0.8"/><path d="M926.5 44.5 L929 37.5 L931.5 44.5 M927.5 42 H930.5" fill="none" stroke="#3a8bbb" stroke-width="1.1"/><line x1="941" y1="33.5" x2="957" y2="48.5" stroke="#333"/><path d="M961 33.5 L976.5 48 M976.5 44 V48.5 H972" fill="none" stroke="#333"/><rect x="981.5" y="35.5" width="15" height="11.5" fill="none" stroke="#333" stroke-width="1.1"/><ellipse cx="1009" cy="41" rx="7.8" ry="5.7" fill="none" stroke="#333" stroke-width="1.1"/><rect x="1021.5" y="35.5" width="15.5" height="11.5" rx="3" fill="none" stroke="#333" stroke-width="1.1"/><path d="M921.5 68.5 L929 54 L936.5 68.5 Z" fill="none" stroke="#333" stroke-width="1.1"/><path d="M941 54.5 H948.5 V67.5 H957" fill="none" stroke="#333" stroke-width="1.1"/><path d="M961 55.5 H968 V66.5 H976 M973.5 64.5 L976 66.5 L973.5 68.5" fill="none" stroke="#333" stroke-width="1.1"/><path d="M981.5 57.5 H989.5 V54.5 L996.5 61 L989.5 67.5 V64.5 H981.5 Z" fill="none" stroke="#333" stroke-width="1.1"/><path d="M1005.5 53.5 H1012.5 V62 H1015.5 L1009 68.5 L1002.5 62 H1005.5 Z" fill="none" stroke="#333" stroke-width="1.1"/><path d="M1021.5 67.5 V58 Q1021.5 54.5 1025 54.5 H1031 Q1029 58 1033 60 Q1036.5 61.5 1036.5 65 V67.5 Z" fill="none" stroke="#333" stroke-width="1.1"/><path d="M922 74 Q920.5 83 927 82 Q934 80 935 76.5 Q935 74 931.5 75 Q925 78 927.5 84 Q930 88.5 936 86" fill="none" stroke="#333" stroke-width="1"/><path d="M941 74 Q955 74 956.5 88" fill="none" stroke="#333" stroke-width="1"/><path d="M961 80.5 Q963 73.5 966 74.5 Q969 76 971 82 Q973 87 976.5 86.5" fill="none" stroke="#333" stroke-width="1"/><path d="M991 73.5 Q988.5 73.5 988.5 76 V79 Q988.5 80.5 986.5 80.5 Q988.5 80.5 988.5 82 V86 Q988.5 88.5 991 88.5" fill="none" stroke="#333" stroke-width="1.1"/><path d="M1007 73.5 Q1009.5 73.5 1009.5 76 V79 Q1009.5 80.5 1011.5 80.5 Q1009.5 80.5 1009.5 82 V86 Q1009.5 88.5 1007 88.5" fill="none" stroke="#333" stroke-width="1.1"/><polygon points="1029.00,74.00 1030.88,78.91 1036.13,79.18 1032.04,82.49 1033.41,87.57 1029.00,84.70 1024.59,87.57 1025.96,82.49 1021.87,79.18 1027.12,78.91" fill="none" stroke="#333" stroke-width="1.1"/><rect x="1071.5" y="37.5" width="18" height="18" fill="#fad58a" stroke="#e8505b" stroke-width="1"/><rect x="1067.5" y="32.5" width="11" height="11" fill="#f6f6f6" stroke="#3b3b3b" stroke-width="1.1"/><rect x="1083.5" y="48.5" width="11" height="11" fill="#f6f6f6" stroke="#3b3b3b" stroke-width="1.1"/><path d="M1078.5 88.5 L1081.0 91.0 L1083.5 88.5" fill="none" stroke="#444" stroke-width="1.1"/><rect x="1114.5" y="32.5" width="27.5" height="27.5" rx="1.5" fill="#f6f6f6" stroke="#3b3b3b" stroke-width="1.1"/><path d="M1143.5 42.5 L1133.5 56" stroke="#3b3b3b" stroke-width="2.6" stroke-linecap="round"/><path d="M1143.5 42.5 L1133.5 56" stroke="#f6f6f6" stroke-width="1"/><path d="M1132 55 Q1127 56 1123.5 61.5 Q1130 61 1134 58 Z" fill="#7cc0dd" stroke="#3a8bbb" stroke-width="0.9"/><path d="M1143.5 88.5 L1146.0 91.0 L1148.5 88.5" fill="none" stroke="#444" stroke-width="1.1"/><path d="M1157 35.5 L1162.5 31 L1167.5 36.5 L1162.5 41 Z" fill="#f6f6f6" stroke="#3b3b3b" stroke-width="1"/><path d="M1160 33 Q1161 29 1164 31" fill="none" stroke="#3b3b3b" stroke-width="1"/><path d="M1166.5 32.5 Q1169.5 34 1168.5 39" fill="none" stroke="#3a8bbb" stroke-width="1.3"/><path d="M1226.5 38.5 L1229.0 41.0 L1231.5 38.5" fill="none" stroke="#444" stroke-width="1.1"/><path d="M1161 62.5 H1155.5 V54.5 H1164" fill="none" stroke="#3b3b3b" stroke-width="1"/><path d="M1160 63.5 L1168 55 Q1169.5 54 1170 55.5 L1162 64 L1159 64.5 Z" fill="#cfe5f2" stroke="#3a8bbb" stroke-width="1"/><path d="M1251 61.5 L1253.5 64.0 L1256 61.5" fill="none" stroke="#444" stroke-width="1.1"/><path d="M1157.5 79.5 H1169.5 Q1170.5 79.5 1170 80.5 L1166.5 86.5 H1155.5 Q1154.5 86.5 1155 85.5 Z" fill="#f0f0f0" stroke="#3b3b3b" stroke-width="1"/><path d="M1155 86.5 L1154.8 89 Q1154.8 90 1156 90 H1166.5 L1170 83.5 V80.5 L1166.5 86.5 Z" fill="#707070" stroke="#3b3b3b" stroke-width="1"/><path d="M1247 84.5 L1249.5 87.0 L1252 84.5" fill="none" stroke="#444" stroke-width="1.1"/><circle cx="1293.5" cy="35.5" r="4.8" fill="none" stroke="#3b3b3b" stroke-width="1.1"/><line x1="1290" y1="39" x2="1283.5" y2="45.5" stroke="#3b3b3b" stroke-width="1.2"/><text x="1287.5" y="60" font-size="7.5" font-family="Liberation Sans" fill="#e8505b">b</text><text x="1290.5" y="69" font-size="8" font-family="Liberation Sans" fill="#3a8bbb">c</text><path d="M1285 58 Q1281.5 63 1287 65.5 H1290 M1288 63.5 L1290 65.5 L1288 67.5" fill="none" stroke="#3a8bbb" stroke-width="1.1"/><path d="M1353 61.5 L1355.5 64.0 L1358 61.5" fill="none" stroke="#444" stroke-width="1.1"/><path d="M1284.5 77.5 V90 L1287.5 87 L1290 92 L1292 91 L1289.5 86.5 L1294 86 Z" fill="none" stroke="#3b3b3b" stroke-width="1"/><path d="M1336 84.5 L1338.5 87.0 L1341 84.5" fill="none" stroke="#444" stroke-width="1.1"/><rect x="1388.5" y="35.5" width="27" height="21" fill="#f6f6f6" stroke="#3b3b3b" stroke-width="1"/><rect x="1390.5" y="37.5" width="23" height="17" fill="none" stroke="#3b3b3b" stroke-width="1"/><path d="M1390.5 41.5 H1413.5 M1407.5 41.5 V54.5" stroke="#3b3b3b" stroke-width="1"/><path d="M1392 30.5 H1399 L1394.5 37.5 H1398.5 L1386.5 49.5 L1390.5 40.5 H1387.5 Z" fill="#fbc843" stroke="#e8505b" stroke-width="1"/><rect x="1453.5" y="32.5" width="13" height="21" rx="2.5" fill="#7cc4df" stroke="#3282b0" stroke-width="1.2"/><path d="M1450.5 46 V50 Q1450.5 57 1460 57 Q1469.5 57 1469.5 50 V46 M1460 57 V59.5 M1455 59.5 H1465" fill="none" stroke="#3b3b3b" stroke-width="1.1"/><path d="M1456.5 87.5 L1459.0 90.0 L1461.5 87.5" fill="none" stroke="#444" stroke-width="1.1"/><path d="M1893.5 116 L1898.0 111.5 L1902.5 116" fill="none" stroke="#444" stroke-width="1.2"/><path d="M1737 9 Q1737 5 1742 5 M1739.5 2.5 L1742 5 L1739.5 7.5 M1734.5 8 H1732.5 V14.5 H1742.5 V10" fill="none" stroke="#b85122" stroke-width="1.1"/><path d="M1809 4.5 H1819.5 V11 H1812.5 L1810 13.5 V11 H1809 Z" fill="none" stroke="#b85122" stroke-width="1.1"/></svg>
<div style="position:absolute;left:0px;top:124px;width:294px;height:854px;background:#e4e6e5;"></div>
<div style="position:absolute;left:275px;top:124px;width:15px;height:854px;background:#dadada;"></div>
<div style="position:absolute;left:275px;top:123px;width:15px;height:15px;background:#f8f9f9;border:1px solid #a8a8a8;box-sizing:border-box;"></div>
<div style="position:absolute;left:275px;top:138px;width:15px;height:107px;background:#f8f9f9;border:1px solid #a8a8a8;box-sizing:border-box;"></div>
<div style="position:absolute;left:275px;top:961px;width:15px;height:15px;background:#f8f9f9;border:1px solid #a8a8a8;box-sizing:border-box;"></div>
<div style="position:absolute;left:294px;top:124px;width:1px;height:854px;background:#c4c4c4;"></div>
<svg style="position:absolute;left:0px;top:0px;" width="300" height="999" viewBox="0 0 300 999"><defs><filter id="pb" x="-10%" y="-10%" width="120%" height="120%"><feGaussianBlur stdDeviation="0.5"/></filter><clipPath id="c1"><circle cx="161.4" cy="175.6" r="20.4"/></clipPath><clipPath id="c2"><circle cx="199.3" cy="220.7" r="34.9"/></clipPath><clipPath id="c3"><circle cx="84.4" cy="502.6" r="38.7"/></clipPath><clipPath id="c5"><circle cx="175.5" cy="784.8" r="34.7"/></clipPath><clipPath id="c6"><circle cx="214.8" cy="830" r="21"/></clipPath><clipPath id="c7"><rect x="28" y="886" width="226" height="92"/></clipPath></defs><path d="M279 133 L282.5 129.5 L286 133 Z" fill="#6a6a6a"/><path d="M279 966.5 L282.5 970 L286 966.5 Z" fill="#6a6a6a"/><rect x="26.5" y="139.5" width="229" height="130" fill="#fdcb62" stroke="#c2c2c2" stroke-width="1"/><rect x="27.5" y="140.5" width="227" height="128" fill="none" stroke="#fbfbfb" stroke-width="1"/><rect x="26.5" y="288.5" width="229" height="130" fill="#fdcb62" stroke="#c2c2c2" stroke-width="1"/><rect x="27.5" y="289.5" width="227" height="128" fill="none" stroke="#fbfbfb" stroke-width="1"/><rect x="26.5" y="437.5" width="229" height="130" fill="#fdcb62" stroke="#c2c2c2" stroke-width="1"/><rect x="27.5" y="438.5" width="227" height="128" fill="none" stroke="#fbfbfb" stroke-width="1"/><rect x="25.5" y="585.5" width="231" height="132" fill="none" stroke="#e9545d" stroke-width="3"/><rect x="27.5" y="587.5" width="227" height="128" fill="#fdcb62" stroke="#fbfbfb" stroke-width="1"/><rect x="26.5" y="735.5" width="229" height="130" fill="#fdcb62" stroke="#c2c2c2" stroke-width="1"/><rect x="27.5" y="736.5" width="227" height="128" fill="none" stroke="#fbfbfb" stroke-width="1"/><rect x="26.5" y="884.5" width="229" height="130" fill="#fdcb62" stroke="#c2c2c2" stroke-width="1"/><rect x="27.5" y="885.5" width="227" height="128" fill="none" stroke="#fbfbfb" stroke-width="1"/><text x="48.90" y="200.00" font-family="Liberation Sans" font-size="17" fill="#1c2155" font-weight="normal" textLength="89.90" lengthAdjust="spacingAndGlyphs" >LANGUAGE</text><text x="48.90" y="219.00" font-family="Liberation Sans" font-size="17" fill="#1c2155" font-weight="normal" textLength="63.60" lengthAdjust="spacingAndGlyphs" >CENTER</text><text x="48.00" y="230.00" font-family="Liberation Sans" font-size="5" fill="#3a3344" font-weight="normal" textLength="85.50" lengthAdjust="spacingAndGlyphs" >Here is where your presentation begins</text><circle cx="196.70" cy="182.00" r="12.85" fill="none" stroke="#21648f" stroke-width="3.3"/><circle cx="173.90" cy="156.70" r="5.10" fill="none" stroke="#2f80b0" stroke-width="1.6"/><circle cx="184.40" cy="164.30" r="1.5" fill="#f6f7f5"/><circle cx="218.50" cy="184.20" r="3.5" fill="#f6f7f5"/><g clip-path="url(#c1)"><g filter="url(#pb)"><rect x="139.0" y="153.2" width="44.8" height="44.8" fill="#84827c"/><rect x="141" y="155" width="42" height="8" fill="#a4a49e"/><ellipse cx="152" cy="170" rx="4" ry="10" fill="#24242a"/><ellipse cx="149" cy="180" rx="5" ry="6" fill="#3a3a40"/><ellipse cx="160" cy="168" rx="4" ry="9" fill="#b8a878"/><ellipse cx="166" cy="172" rx="5" ry="12" fill="#2e2e34"/><ellipse cx="176" cy="170" rx="5" ry="11" fill="#1e1e24"/><ellipse cx="158" cy="186" rx="5" ry="4" fill="#c0b48c"/><rect x="150" y="188" width="3" height="10" fill="#d8d0b0"/><rect x="168" y="186" width="2.5" height="12" fill="#d0c8a8"/><ellipse cx="170" cy="168" rx="1.2" ry="1.2" fill="#c06030"/><ellipse cx="162" cy="193" rx="10" ry="4" fill="#7a7466"/><ellipse cx="143" cy="172" rx="3" ry="8" fill="#a8a8a2"/></g></g><g clip-path="url(#c2)"><g filter="url(#pb)"><rect x="162.4" y="183.79999999999998" width="73.8" height="73.8" fill="#bebebb"/><rect x="164" y="186" width="40" height="28" fill="#a6a6a2"/><rect x="184" y="192" width="3.5" height="7" fill="#35353a"/><rect x="190" y="192" width="3.5" height="7" fill="#35353a"/><rect x="196" y="192" width="3.5" height="7" fill="#3a3a3e"/><rect x="182" y="203" width="3" height="7" fill="#45454a"/><rect x="188" y="203" width="3" height="7" fill="#505055"/><rect x="194" y="203" width="3" height="7" fill="#45454a"/><ellipse cx="224" cy="232" rx="22" ry="26" fill="#d8d8d4"/><ellipse cx="209" cy="203" rx="9" ry="10" fill="#3a3428"/><ellipse cx="207" cy="206" rx="5" ry="6" fill="#8a7a58"/><ellipse cx="186" cy="232" rx="6" ry="14" fill="#4a4a4c"/><ellipse cx="195" cy="245" rx="7" ry="5" fill="#8c7c58"/><ellipse cx="205" cy="254" rx="15" ry="3" fill="#f0f0ee"/><ellipse cx="170" cy="230" rx="8" ry="20" fill="#cfcfcb"/><ellipse cx="194" cy="222" rx="3" ry="9" fill="#3a3a30"/></g></g><circle cx="164.30" cy="210.50" r="7.95" fill="none" stroke="#31aab8" stroke-width="2.5"/><circle cx="160.40" cy="224.20" r="1.5" fill="#f6f7f5"/><circle cx="173.90" cy="245.90" r="8" fill="#f6f7f5"/><circle cx="226.60" cy="245.90" r="9.70" fill="none" stroke="#ee508a" stroke-width="2.8"/><text x="87.00" y="312.30" font-family="Liberation Sans" font-size="7.6" fill="#2b2d4a" font-weight="normal" textLength="108.20" lengthAdjust="spacingAndGlyphs" >CONTENTS OF THIS TEMPLATE</text><text x="48.00" y="330.70" font-family="Liberation Sans" font-size="4" fill="#4a3f40" font-weight="normal" textLength="83.50" lengthAdjust="spacingAndGlyphs" >Here's what you'll find in this <tspan fill="#e8407c" font-weight="bold">Slidesgo</tspan> template:</text><text x="59.00" y="339.50" font-family="Liberation Sans" font-size="4" fill="#4a3f40" font-weight="normal" textLength="174.00" lengthAdjust="spacingAndGlyphs" >A slide structure based on a <tspan font-weight="bold">school center</tspan>, which you can easily adapt to your needs. For more info</text><text x="59.00" y="344.70" font-family="Liberation Sans" font-size="4" fill="#4a3f40" font-weight="normal" textLength="130.50" lengthAdjust="spacingAndGlyphs" >on how to edit the template, please visit <tspan fill="#e8407c" font-weight="bold">Slidesgo School</tspan> or read our <tspan fill="#e8407c" font-weight="bold">FAQs.</tspan></text><text x="59.00" y="349.60" font-family="Liberation Sans" font-size="4" fill="#4a3f40" font-weight="normal" textLength="174.70" lengthAdjust="spacingAndGlyphs" >An assortment of pictures to use in the presentation can be found in the <tspan fill="#e8407c" font-weight="bold">alternative resources slide.</tspan></text><text x="59.00" y="353.60" font-family="Liberation Sans" font-size="4" fill="#4a3f40" font-weight="normal" textLength="145.80" lengthAdjust="spacingAndGlyphs" >A <tspan fill="#e8407c" font-weight="bold">thanks slide</tspan>, which you must keep so that proper credits for our design are given.</text><text x="59.00" y="358.50" font-family="Liberation Sans" font-size="4" fill="#4a3f40" font-weight="normal" textLength="142.00" lengthAdjust="spacingAndGlyphs" >A <tspan fill="#e8407c" font-weight="bold">resources slide</tspan>, where you’ll find links to all the elements used in the template.</text><text x="59.00" y="362.70" font-family="Liberation Sans" font-size="4" fill="#4a3f40" font-weight="normal" textLength="35.50" lengthAdjust="spacingAndGlyphs" ><tspan fill="#e8407c" font-weight="bold">Instructions for use.</tspan></text><text x="59.00" y="367.70" font-family="Liberation Sans" font-size="4" fill="#4a3f40" font-weight="normal" textLength="29.00" lengthAdjust="spacingAndGlyphs" >Final slides with:</text><text x="70.60" y="372.40" font-family="Liberation Sans" font-size="4" fill="#4a3f40" font-weight="normal" textLength="74.40" lengthAdjust="spacingAndGlyphs" >The <tspan fill="#e8407c" font-weight="bold">fonts and colors</tspan> used in the template.</text><text x="70.60" y="376.60" font-family="Liberation Sans" font-size="4" fill="#4a3f40" font-weight="normal" textLength="113.40" lengthAdjust="spacingAndGlyphs" >More <tspan fill="#e8407c" font-weight="bold">infographic resources</tspan>, whose size and color can be edited.</text><text x="70.60" y="381.60" font-family="Liberation Sans" font-size="4" fill="#4a3f40" font-weight="normal" textLength="150.40" lengthAdjust="spacingAndGlyphs" >Sets of <tspan fill="#e8407c" font-weight="bold">customizable icons</tspan> of the following themes: general, business, avatar, creative</text><text x="70.60" y="385.80" font-family="Liberation Sans" font-size="4" fill="#4a3f40" font-weight="normal" textLength="157.40" lengthAdjust="spacingAndGlyphs" >process, education, help &amp; support, medical, nature, performing arts, SEO &amp; marketing, and</text><text x="70.60" y="390.60" font-family="Liberation Sans" font-size="4" fill="#4a3f40" font-weight="normal" textLength="18.40" lengthAdjust="spacingAndGlyphs" >teamwork.</text><text x="48.00" y="399.50" font-family="Liberation Sans" font-size="4" fill="#4a3f40" font-weight="normal" textLength="118.00" lengthAdjust="spacingAndGlyphs" >You can delete this slide when you’re done editing the presentation.</text><text x="52.00" y="339.50" font-family="Liberation Sans" font-size="4" fill="#4a3f40" font-weight="normal" textLength="3.00" lengthAdjust="spacingAndGlyphs" >1.</text><text x="52.00" y="349.60" font-family="Liberation Sans" font-size="4" fill="#4a3f40" font-weight="normal" textLength="3.00" lengthAdjust="spacingAndGlyphs" >2.</text><text x="52.00" y="353.60" font-family="Liberation Sans" font-size="4" fill="#4a3f40" font-weight="normal" textLength="3.00" lengthAdjust="spacingAndGlyphs" >3.</text><text x="52.00" y="358.50" font-family="Liberation Sans" font-size="4" fill="#4a3f40" font-weight="normal" textLength="3.00" lengthAdjust="spacingAndGlyphs" >4.</text><text x="52.00" y="362.70" font-family="Liberation Sans" font-size="4" fill="#4a3f40" font-weight="normal" textLength="3.00" lengthAdjust="spacingAndGlyphs" >5.</text><text x="52.00" y="367.70" font-family="Liberation Sans" font-size="4" fill="#4a3f40" font-weight="normal" textLength="3.00" lengthAdjust="spacingAndGlyphs" >6.</text><circle cx="65.00" cy="371.20" r="0.6" fill="#4a3f40"/><circle cx="65.00" cy="375.40" r="0.6" fill="#4a3f40"/><circle cx="65.00" cy="380.40" r="0.6" fill="#4a3f40"/><circle cx="64.00" cy="469.10" r="16.05" fill="none" stroke="#21648f" stroke-width="3.3"/><circle cx="88.30" cy="458.00" r="3.3" fill="#f6f7f5"/><g clip-path="url(#c3)"><g filter="url(#pb)"><rect x="43.7" y="461.90000000000003" width="81.4" height="81.4" fill="#d4dce0"/><rect x="45" y="462" width="80" height="14" fill="#e6ecef"/><ellipse cx="100" cy="480" rx="12" ry="10" fill="#c8d4dc"/><ellipse cx="54" cy="488" rx="5" ry="6" fill="#c8b090"/><ellipse cx="52" cy="506" rx="8" ry="10" fill="#ececea"/><ellipse cx="56" cy="522" rx="8" ry="6" fill="#a89c80"/><ellipse cx="72" cy="488" rx="6" ry="8" fill="#3a3028"/><ellipse cx="72" cy="491" rx="3.5" ry="5" fill="#d0b898"/><ellipse cx="72" cy="506" rx="7" ry="7" fill="#1e1e24"/><ellipse cx="74" cy="520" rx="8" ry="7" fill="#2a3a90"/><ellipse cx="96" cy="477" rx="7" ry="6" fill="#5a4838"/><ellipse cx="97" cy="484" rx="4" ry="4" fill="#c8a888"/><ellipse cx="95" cy="498" rx="11" ry="9" fill="#b8561e"/><ellipse cx="93" cy="514" rx="9" ry="8" fill="#22222a"/><ellipse cx="95" cy="521" rx="8" ry="4" fill="#b05020"/><ellipse cx="103" cy="506" rx="4" ry="6" fill="#e87898"/><ellipse cx="88" cy="533" rx="7" ry="7" fill="#4a78a8"/><ellipse cx="116" cy="490" rx="5" ry="8" fill="#3a3430"/><ellipse cx="116" cy="508" rx="7" ry="10" fill="#7890a8"/><ellipse cx="60" cy="532" rx="10" ry="5" fill="#8ac0d8"/></g></g><circle cx="100.00" cy="465.80" r="5.20" fill="none" stroke="#3085b0" stroke-width="1.6"/><circle cx="110.60" cy="469.80" r="1.5" fill="#f6f7f5"/><circle cx="60.40" cy="530.10" r="8.35" fill="none" stroke="#31aab8" stroke-width="2.3"/><circle cx="100.50" cy="540.60" r="10.40" fill="none" stroke="#ee508a" stroke-width="2.6"/><circle cx="83.00" cy="545.20" r="3" fill="#f6f7f5"/><text x="130.50" y="465.80" font-family="Liberation Sans" font-size="14.5" fill="#1c2155" font-weight="normal" textLength="13.10" lengthAdjust="spacingAndGlyphs" >01</text><text x="130.50" y="475.00" font-family="Liberation Sans" font-size="5.6" fill="#fbf3df" font-weight="bold" textLength="68.50" lengthAdjust="spacingAndGlyphs" >OUR TEACHING METHOD</text><text x="130.50" y="481.00" font-family="Liberation Sans" font-size="3.8" fill="#3a3344" font-weight="normal" textLength="83.50" lengthAdjust="spacingAndGlyphs" >Here you could describe the topic of the section</text><text x="153.20" y="499.70" font-family="Liberation Sans" font-size="14.5" fill="#1c2155" font-weight="normal" textLength="16.40" lengthAdjust="spacingAndGlyphs" >02</text><text x="153.20" y="509.00" font-family="Liberation Sans" font-size="5.6" fill="#fbf3df" font-weight="bold" textLength="62.80" lengthAdjust="spacingAndGlyphs" >OUR ACADEMIC AREAS</text><text x="153.20" y="514.40" font-family="Liberation Sans" font-size="3.8" fill="#3a3344" font-weight="normal" textLength="83.80" lengthAdjust="spacingAndGlyphs" >Here you could describe the topic of the section</text><text x="130.50" y="532.70" font-family="Liberation Sans" font-size="14.5" fill="#1c2155" font-weight="normal" textLength="16.80" lengthAdjust="spacingAndGlyphs" >03</text><text x="130.50" y="542.00" font-family="Liberation Sans" font-size="5.6" fill="#fbf3df" font-weight="bold" textLength="42.50" lengthAdjust="spacingAndGlyphs" >OUR TEACHERS</text><text x="130.50" y="547.00" font-family="Liberation Sans" font-size="3.8" fill="#3a3344" font-weight="normal" textLength="83.50" lengthAdjust="spacingAndGlyphs" >Here you could describe the topic of the section</text><g transform="translate(28 588) scale(0.16618) translate(-416 -142)"><circle cx="724" cy="433.5" r="98.0" fill="none" stroke="#21648f" stroke-width="29.0"/><circle cx="760.8" cy="451" r="13.7" fill="none" stroke="#2eaab4" stroke-width="6.6"/><circle cx="737.5" cy="487" r="6.5" fill="#f5f6f4"/><circle cx="870" cy="442.3" r="13.5" fill="none" stroke="#1c1f55" stroke-width="7"/><circle cx="944.3" cy="468.4" r="27.549999999999997" fill="none" stroke="#3784aa" stroke-width="13.7"/><circle cx="1000.5" cy="499.5" r="6.5" fill="#f5f6f4"/><circle cx="984" cy="536.3" r="13.675" fill="none" stroke="#ee4f8c" stroke-width="6.65"/><circle cx="713.3" cy="656.8" r="58.75" fill="none" stroke="#ee508a" stroke-width="23.5"/><circle cx="664.5" cy="566.5" r="10.5" fill="#f5f6f4"/><pattern id="tealpat" patternUnits="userSpaceOnUse" width="40" height="40"><rect width="40" height="40" fill="#3bb9a6"/><path d="M0 0h9v1h-9zM16 0h6v1h-6zM27 0h1v1h-1zM34 0h3v1h-3zM1 1h5v1h-5zM8 1h1v1h-1zM16 1h6v1h-6zM28 1h3v1h-3zM35 1h3v1h-3zM1 2h5v1h-5zM15 2h1v1h-1zM19 2h6v1h-6zM29 2h8v1h-8zM1 3h3v1h-3zM10 3h2v1h-2zM16 3h2v1h-2zM19 3h6v1h-6zM30 3h1v1h-1zM32 3h1v1h-1zM34 3h2v1h-2zM1 4h2v1h-2zM7 4h1v1h-1zM9 4h1v1h-1zM15 4h10v1h-10zM32 4h2v1h-2zM0 5h3v1h-3zM6 5h3v1h-3zM16 5h2v1h-2zM19 5h4v1h-4zM29 5h1v1h-1zM32 5h2v1h-2zM38 5h2v1h-2zM0 6h1v1h-1zM7 6h2v1h-2zM14 6h5v1h-5zM28 6h3v1h-3zM32 6h3v1h-3zM38 6h2v1h-2zM0 7h1v1h-1zM3 7h2v1h-2zM8 7h1v1h-1zM13 7h5v1h-5zM26 7h1v1h-1zM35 7h2v1h-2zM39 7h1v1h-1zM0 8h1v1h-1zM3 8h2v1h-2zM7 8h2v1h-2zM12 8h5v1h-5zM25 8h4v1h-4zM36 8h2v1h-2zM39 8h1v1h-1zM4 9h1v1h-1zM6 9h3v1h-3zM11 9h5v1h-5zM25 9h5v1h-5zM5 10h5v1h-5zM11 10h6v1h-6zM18 10h1v1h-1zM25 10h6v1h-6zM32 10h3v1h-3zM37 10h1v1h-1zM6 11h8v1h-8zM15 11h1v1h-1zM17 11h1v1h-1zM21 11h2v1h-2zM24 11h4v1h-4zM32 11h4v1h-4zM3 12h2v1h-2zM6 12h4v1h-4zM12 12h3v1h-3zM20 12h6v1h-6zM34 12h1v1h-1zM7 13h2v1h-2zM12 13h3v1h-3zM17 13h1v1h-1zM19 13h6v1h-6zM26 13h2v1h-2zM30 13h2v1h-2zM11 14h3v1h-3zM18 14h4v1h-4zM25 14h3v1h-3zM30 14h2v1h-2zM0 15h2v1h-2zM8 15h6v1h-6zM26 15h3v1h-3zM31 15h1v1h-1zM34 15h1v1h-1zM38 15h2v1h-2zM0 16h3v1h-3zM9 16h2v1h-2zM15 16h2v1h-2zM27 16h1v1h-1zM34 16h1v1h-1zM38 16h2v1h-2zM2 17h1v1h-1zM6 17h1v1h-1zM16 17h2v1h-2zM21 17h1v1h-1zM27 17h1v1h-1zM38 17h1v1h-1zM2 18h1v1h-1zM6 18h2v1h-2zM16 18h2v1h-2zM21 18h5v1h-5zM31 18h1v1h-1zM1 19h1v1h-1zM5 19h8v1h-8zM17 19h2v1h-2zM23 19h3v1h-3zM38 19h1v1h-1zM0 20h1v1h-1zM5 20h2v1h-2zM9 20h4v1h-4zM16 20h3v1h-3zM22 20h2v1h-2zM37 20h1v1h-1zM39 20h1v1h-1zM0 21h1v1h-1zM10 21h2v1h-2zM14 21h5v1h-5zM22 21h2v1h-2zM38 21h2v1h-2zM0 22h1v1h-1zM11 22h1v1h-1zM15 22h3v1h-3zM21 22h3v1h-3zM36 22h2v1h-2zM8 23h1v1h-1zM11 23h2v1h-2zM16 23h2v1h-2zM21 23h3v1h-3zM31 23h3v1h-3zM35 23h4v1h-4zM1 24h1v1h-1zM9 24h4v1h-4zM17 24h1v1h-1zM21 24h3v1h-3zM33 24h5v1h-5zM0 25h1v1h-1zM9 25h2v1h-2zM20 25h2v1h-2zM23 25h3v1h-3zM30 25h3v1h-3zM34 25h2v1h-2zM38 25h1v1h-1zM19 26h6v1h-6zM29 26h4v1h-4zM34 26h2v1h-2zM38 26h2v1h-2zM3 27h1v1h-1zM12 27h3v1h-3zM18 27h6v1h-6zM25 27h1v1h-1zM32 27h8v1h-8zM1 28h6v1h-6zM12 28h3v1h-3zM18 28h2v1h-2zM21 28h2v1h-2zM24 28h1v1h-1zM26 28h1v1h-1zM32 28h3v1h-3zM36 28h4v1h-4zM1 29h5v1h-5zM13 29h3v1h-3zM17 29h1v1h-1zM23 29h7v1h-7zM32 29h1v1h-1zM36 29h3v1h-3zM3 30h4v1h-4zM9 30h1v1h-1zM13 30h6v1h-6zM23 30h3v1h-3zM28 30h3v1h-3zM32 30h2v1h-2zM36 30h2v1h-2zM4 31h3v1h-3zM9 31h2v1h-2zM13 31h8v1h-8zM23 31h2v1h-2zM27 31h4v1h-4zM32 31h1v1h-1zM34 31h1v1h-1zM4 32h4v1h-4zM13 32h1v1h-1zM15 32h6v1h-6zM28 32h4v1h-4zM34 32h1v1h-1zM3 33h4v1h-4zM9 33h2v1h-2zM14 33h7v1h-7zM29 33h2v1h-2zM2 34h4v1h-4zM9 34h3v1h-3zM14 34h6v1h-6zM23 34h2v1h-2zM29 34h2v1h-2zM33 34h2v1h-2zM2 35h5v1h-5zM8 35h4v1h-4zM15 35h5v1h-5zM23 35h3v1h-3zM32 35h3v1h-3zM2 36h1v1h-1zM5 36h6v1h-6zM18 36h2v1h-2zM24 36h1v1h-1zM31 36h4v1h-4zM36 36h3v1h-3zM6 37h4v1h-4zM15 37h4v1h-4zM27 37h1v1h-1zM31 37h3v1h-3zM36 37h3v1h-3zM3 38h2v1h-2zM6 38h3v1h-3zM12 38h1v1h-1zM18 38h3v1h-3zM27 38h1v1h-1zM31 38h1v1h-1zM35 38h3v1h-3zM1 39h8v1h-8zM12 39h1v1h-1zM16 39h5v1h-5zM26 39h1v1h-1zM35 39h1v1h-1z" fill="#37a3cf"/></pattern><circle cx="923" cy="608" r="46.7" fill="none" stroke="url(#tealpat)" stroke-width="18.6"/><circle cx="828.6" cy="647.2" r="13.95" fill="none" stroke="#3a85aa" stroke-width="6.899999999999999"/><circle cx="870" cy="685.7" r="13.5" fill="none" stroke="#1c1f55" stroke-width="7"/><circle cx="808.5" cy="692.8" r="6.5" fill="#f5f6f4"/><circle cx="927" cy="693" r="10" fill="#f5f6f4"/><path d="M789.7 541 Q773 543 772.7 560 L772.7 569.5 M772.7 575 L772.7 584 Q772.7 598.2 787 598.2 L813 598.2 Q815 603 808 609.5 Q820 611 823 598.2 L837 598.2 Q851 598.2 851 584 L851 564.8" fill="none" stroke="#f5f6f4" stroke-width="3.4" stroke-linecap="round" stroke-linejoin="round"/><path d="M831.5 563.2 L804 563.2 Q789.7 563.2 789.7 549 L789.7 505.7 Q789.7 491.7 804 491.7 L888 491.7 Q902.6 491.7 902.6 505.7 L902.6 511.5 M902.6 517.5 L902.6 549 Q902.6 563.2 888 563.2 L871 563.2 Q866 575 878.5 584.5 Q862 585 859 563.2 L836 563.2" fill="none" stroke="#f5f6f4" stroke-width="3.4" stroke-linecap="round" stroke-linejoin="round"/><circle cx="821.6" cy="524.5" r="4.7" fill="none" stroke="#f5f6f4" stroke-width="3.2"/><circle cx="844.5" cy="524.5" r="4.7" fill="none" stroke="#f5f6f4" stroke-width="3.2"/><circle cx="868.3" cy="524.5" r="4.7" fill="none" stroke="#f5f6f4" stroke-width="3.2"/><text x="1110.00" y="499.30" font-family="Liberation Sans" font-size="28.5" fill="#1c2155" font-weight="normal" textLength="489.00" lengthAdjust="spacingAndGlyphs" >“This is a quote. Words full of wisdom</text><text x="1110.00" y="533.00" font-family="Liberation Sans" font-size="28.5" fill="#1c2155" font-weight="normal" textLength="486.00" lengthAdjust="spacingAndGlyphs" >that someone important said and can</text><text x="1110.00" y="566.60" font-family="Liberation Sans" font-size="28.5" fill="#1c2155" font-weight="normal" textLength="390.00" lengthAdjust="spacingAndGlyphs" >make the reader get inspired.”</text><text x="1109.00" y="628.20" font-family="Liberation Sans" font-size="41.5" fill="#f7f7f4" font-weight="normal" textLength="440.00" lengthAdjust="spacingAndGlyphs" >—Someone Famous</text><text x="777.00" y="848.00" font-family="Liberation Sans" font-size="34.5" fill="#141414" font-weight="bold" textLength="249.00" lengthAdjust="spacingAndGlyphs" stroke="#fff4d8" stroke-width="2" paint-order="stroke">HELLO THERE!</text></g><text x="60.70" y="786.80" font-family="Liberation Sans" font-size="9.3" fill="#fbf5e6" font-weight="normal" textLength="62.60" lengthAdjust="spacingAndGlyphs" >INTRODUCTION</text><text x="49.00" y="796.50" font-family="Liberation Sans" font-size="4.6" fill="#3a3344" font-weight="normal" textLength="85.80" lengthAdjust="spacingAndGlyphs" >Mercury is the closest planet to the Sun</text><text x="56.00" y="801.00" font-family="Liberation Sans" font-size="4.6" fill="#3a3344" font-weight="normal" textLength="72.00" lengthAdjust="spacingAndGlyphs" >and the smallest one in the Solar</text><text x="51.60" y="807.20" font-family="Liberation Sans" font-size="4.6" fill="#3a3344" font-weight="normal" textLength="81.30" lengthAdjust="spacingAndGlyphs" >System—it’s only a bit larger than our</text><text x="49.00" y="813.50" font-family="Liberation Sans" font-size="4.6" fill="#3a3344" font-weight="normal" textLength="86.50" lengthAdjust="spacingAndGlyphs" >Moon. The planet’s name has nothing to</text><text x="66.60" y="819.40" font-family="Liberation Sans" font-size="4.6" fill="#3a3344" font-weight="normal" textLength="51.20" lengthAdjust="spacingAndGlyphs" >do with the liquid metal</text><circle cx="187.30" cy="830.70" r="17.35" fill="none" stroke="#21648f" stroke-width="3.3"/><g clip-path="url(#c5)"><g filter="url(#pb)"><rect x="138.8" y="748.0999999999999" width="73.4" height="73.4" fill="#2a2a2e"/><rect x="141" y="766" width="26" height="3" fill="#5a5a5e"/><rect x="141" y="780" width="26" height="24" fill="#48484e"/><rect x="146" y="785" width="8" height="6" fill="#8a8a90"/><rect x="156" y="786" width="8" height="5" fill="#707076"/><rect x="141" y="803" width="26" height="3" fill="#1a1a1e"/><rect x="146" y="808" width="10" height="6" fill="#5a5a60"/><ellipse cx="163" cy="754" rx="4" ry="2.2" fill="#e8e8e8"/><ellipse cx="157" cy="761" rx="3.5" ry="2" fill="#dcdcdc"/><ellipse cx="170" cy="761" rx="3.5" ry="2" fill="#dcdcdc"/><ellipse cx="159" cy="771" rx="2.2" ry="2.2" fill="#c85a30"/><ellipse cx="175" cy="772" rx="3" ry="1.5" fill="#d0d0d0"/><ellipse cx="185" cy="777" rx="11" ry="15" fill="#5e4a32"/><ellipse cx="185" cy="771" rx="5.5" ry="7.5" fill="#d8b890"/><ellipse cx="184" cy="802" rx="16" ry="12" fill="#e8e8e6"/><ellipse cx="180" cy="797" rx="3.5" ry="3.5" fill="#6a8aa8"/><ellipse cx="197" cy="796" rx="7" ry="10" fill="#cbcbc7"/><ellipse cx="183" cy="805" rx="5" ry="4" fill="#c8a078"/><ellipse cx="178" cy="817" rx="15" ry="5" fill="#f2f2f0"/><ellipse cx="168" cy="806" rx="3" ry="6" fill="#b89070"/></g></g><g clip-path="url(#c6)"><g filter="url(#pb)"><rect x="191.8" y="807" width="46" height="46" fill="#c2c2be"/><ellipse cx="214" cy="814" rx="18" ry="6" fill="#dadad6"/><ellipse cx="213" cy="833" rx="5" ry="11" fill="#3c3c46"/><ellipse cx="212" cy="820" rx="3" ry="3.2" fill="#4a3a30"/><ellipse cx="203" cy="826" rx="3" ry="4" fill="#2a2a2a"/><ellipse cx="204" cy="839" rx="5" ry="6" fill="#e4e4e2"/><ellipse cx="229" cy="828" rx="3" ry="4" fill="#3a3a3a"/><ellipse cx="229" cy="840" rx="5" ry="6" fill="#d8d8d6"/><ellipse cx="220" cy="836" rx="4" ry="3" fill="#f0f0ee"/><ellipse cx="197" cy="832" rx="2" ry="8" fill="#8a8a88"/></g></g><circle cx="146.40" cy="762.50" r="4.90" fill="none" stroke="#3085b0" stroke-width="1.6"/><circle cx="208.30" cy="761.90" r="10.60" fill="none" stroke="#ee508a" stroke-width="2.8"/><circle cx="215.50" cy="778.30" r="3.3" fill="#f6f7f5"/><circle cx="207.60" cy="806.50" r="1.5" fill="#f6f7f5"/><circle cx="226.90" cy="808.40" r="7.75" fill="none" stroke="#31aab8" stroke-width="2.5"/><circle cx="162.00" cy="820.90" r="3" fill="#f6f7f5"/><circle cx="197.80" cy="847.80" r="2" fill="#f6f7f5"/><g clip-path="url(#c7)"><circle cx="42.90" cy="902.70" r="12.40" fill="none" stroke="#21648f" stroke-width="3.6"/><circle cx="62.70" cy="914.10" r="6.10" fill="none" stroke="#31aab8" stroke-width="1.8"/><circle cx="82.00" cy="914.70" r="7.70" fill="none" stroke="#ee508a" stroke-width="2"/><circle cx="35.60" cy="926.20" r="7.30" fill="none" stroke="#ee508a" stroke-width="2.2"/><circle cx="51.50" cy="923.20" r="3.50" fill="none" stroke="#3085b0" stroke-width="1.6"/><circle cx="69.60" cy="937.30" r="12.55" fill="none" stroke="#21648f" stroke-width="3.3"/><circle cx="39.50" cy="948.50" r="9.85" fill="none" stroke="#31aab8" stroke-width="2.3"/><circle cx="57.00" cy="953.90" r="3.45" fill="none" stroke="#ee508a" stroke-width="1.5"/><circle cx="79.60" cy="959.30" r="6.10" fill="none" stroke="#2f9cc8" stroke-width="1.8"/><circle cx="45.50" cy="965.00" r="3.45" fill="none" stroke="#1c2155" stroke-width="1.5"/><circle cx="66.40" cy="970.50" r="7.50" fill="none" stroke="#ee508a" stroke-width="2.2"/><circle cx="86.60" cy="971.00" r="3.45" fill="none" stroke="#ee508a" stroke-width="1.5"/><circle cx="51.30" cy="976.80" r="3.25" fill="none" stroke="#3085b0" stroke-width="1.5"/><circle cx="79.00" cy="978.50" r="3.25" fill="none" stroke="#3085b0" stroke-width="1.5"/><circle cx="69.60" cy="904.70" r="3" fill="#f6f7f5"/><circle cx="47.00" cy="929.80" r="1.2" fill="#f6f7f5"/><circle cx="86.80" cy="927.10" r="1.3" fill="#f6f7f5"/><circle cx="51.90" cy="937.00" r="1" fill="#f6f7f5"/><circle cx="85.60" cy="950.00" r="1" fill="#f6f7f5"/><circle cx="65.20" cy="956.90" r="1" fill="#f6f7f5"/><circle cx="53.70" cy="967.10" r="1.3" fill="#f6f7f5"/><circle cx="44.00" cy="975.00" r="1.3" fill="#f6f7f5"/><text x="178.40" y="935.80" font-family="Liberation Sans" font-size="21.5" fill="#fbf7ec" font-weight="normal" textLength="19.90" lengthAdjust="spacingAndGlyphs" stroke="#fdcb62" stroke-width="0.5">01</text><text x="164.60" y="950.90" font-family="Liberation Sans" font-size="11.4" fill="#2b2d4a" font-weight="normal" textLength="48.10" lengthAdjust="spacingAndGlyphs" >THIS IS A</text><text x="147.70" y="964.00" font-family="Liberation Sans" font-size="11.4" fill="#2b2d4a" font-weight="normal" textLength="81.90" lengthAdjust="spacingAndGlyphs" >SECTION TITLE</text></g></svg>
<div id="t62" class="tx" style="transform:scaleX(1.0000);left:4.00px;top:137px;font-size:15.5px;color:#444;font-weight:normal;font-family:'Liberation Sans',sans-serif;">1</div>
<div id="t63" class="tx" style="transform:scaleX(1.0000);left:5.00px;top:286px;font-size:15.5px;color:#444;font-weight:normal;font-family:'Liberation Sans',sans-serif;">2</div>
<div id="t64" class="tx" style="transform:scaleX(1.0000);left:5.00px;top:435px;font-size:15.5px;color:#444;font-weight:normal;font-family:'Liberation Sans',sans-serif;">3</div>
<div id="t65" class="tx" style="transform:scaleX(1.0000);left:4.00px;top:584px;font-size:15.5px;color:#b8502a;font-weight:normal;font-family:'Liberation Sans',sans-serif;">4</div>
<div id="t66" class="tx" style="transform:scaleX(1.0000);left:4.00px;top:733px;font-size:15.5px;color:#444;font-weight:normal;font-family:'Liberation Sans',sans-serif;">5</div>
<div id="t67" class="tx" style="transform:scaleX(1.0000);left:5.00px;top:882px;font-size:15.5px;color:#444;font-weight:normal;font-family:'Liberation Sans',sans-serif;">6</div>
<div style="position:absolute;left:1896px;top:123px;width:13px;height:737px;background:#dadada;"></div>
<div style="position:absolute;left:1896px;top:123px;width:14px;height:15px;background:#f8f9f9;border:1px solid #a8a8a8;box-sizing:border-box;"></div>
<div style="position:absolute;left:1896px;top:187px;width:14px;height:17px;background:#f8f9f9;border:1px solid #a8a8a8;box-sizing:border-box;"></div>
<div style="position:absolute;left:1896px;top:859px;width:14px;height:15px;background:#f8f9f9;border:1px solid #a8a8a8;box-sizing:border-box;"></div>
<div style="position:absolute;left:0px;top:978px;width:1909px;height:21px;background:#f3f2f1;"></div>
<div style="position:absolute;left:0px;top:978px;width:1909px;height:1px;background:#cacaca;"></div>
<div style="position:absolute;left:1545px;top:979px;width:40px;height:20px;background:#c6c6c6;"></div>
<svg style="position:absolute;left:0px;top:0px;" width="1909" height="999" viewBox="0 0 1909 999"><path d="M1900 132 L1903.5 128.5 L1907 132 Z" fill="#6a6a6a"/><path d="M1900 865 L1903.5 868.5 L1907 865 Z" fill="#6a6a6a"/><path d="M1900 883 L1903.5 879 L1907 883 Z M1900 887 L1903.5 883 L1907 887 Z" fill="#6a6a6a"/><path d="M1900 897 L1903.5 901 L1907 897 Z M1900 901 L1903.5 905 L1907 901 Z" fill="#6a6a6a"/><path d="M1478.5 988.5 H1493 M1478.5 991.5 H1493 M1478.5 994.5 H1486" stroke="#444" stroke-width="1"/><path d="M1483 985.5 L1485.5 983 L1488 985.5" fill="none" stroke="#444" stroke-width="1"/><rect x="1558.5" y="983.5" width="13.5" height="11" fill="none" stroke="#333" stroke-width="1.2"/><path d="M1561 983.5 V994.5 M1561 991.5 H1572" stroke="#333" stroke-width="1.2"/><rect x="1564.5" y="986" width="4" height="2.5" fill="none" stroke="#333" stroke-width="1"/><rect x="1598.5" y="983.5" width="5.5" height="4.5" fill="none" stroke="#333" stroke-width="1.1"/><rect x="1606.5" y="983.5" width="5.5" height="4.5" fill="none" stroke="#333" stroke-width="1.1"/><rect x="1598.5" y="990.5" width="5.5" height="4.5" fill="none" stroke="#333" stroke-width="1.1"/><rect x="1606.5" y="990.5" width="5.5" height="4.5" fill="none" stroke="#333" stroke-width="1.1"/><path d="M1644.5 985 Q1641 983.5 1637.5 984 V994.5 Q1641 994 1644.5 995.5 Q1648 994 1651.5 994.5 V984 Q1648 983.5 1644.5 985 V995.5 M1639.5 987 H1642.5 M1639.5 989.5 H1642.5 M1639.5 992 H1642.5 M1646.5 987 H1649.5 M1646.5 989.5 H1649.5 M1646.5 992 H1649.5" fill="none" stroke="#333" stroke-width="1"/><path d="M1678 983.5 H1691 M1679.5 983.5 V990.5 H1689.5 V983.5 M1684.5 990.5 V994.5 M1681 994.5 H1688 M1682 986.5 H1687" fill="none" stroke="#333" stroke-width="1.1"/><path d="M1711 988.5 H1719" stroke="#444" stroke-width="1.1"/><path d="M1724 989.5 H1824" stroke="#a0a0a0" stroke-width="1"/><path d="M1774.5 986 V993" stroke="#a0a0a0"/><rect x="1779" y="983" width="5" height="11" fill="#6b6b6b"/><path d="M1829 988.5 H1837.5 M1833.25 984.25 V992.75" stroke="#444" stroke-width="1.1"/><rect x="1896.5" y="985.5" width="7" height="6" fill="none" stroke="#333" stroke-width="1.2"/><path d="M1894.5 985.5 L1892.3 988.5 L1894.5 991.5 M1905.5 985.5 L1907.7 988.5 L1905.5 991.5 M1897.5 983.5 L1900 981 L1902.5 983.5 M1897.5 993.5 L1900 996 L1902.5 993.5" fill="none" stroke="#333" stroke-width="1.2"/><path d="M82.5 983.5 H88.5 V996 H82.5 Z M88.5 983.5 H95.5 V991 M88.5 996 L91 993.5 L93 995.5 L97 991" fill="none" stroke="#444" stroke-width="1"/><path d="M504.5 180.5 V196.5 L508.5 192.8 L511.5 198.8 L513.8 197.8 L511 192 L516.2 192 Z" fill="#f8f8f8" stroke="#111" stroke-width="1"/></svg>
<div id="t68" class="tx" style="transform:scaleX(1.0000);left:1.00px;top:983px;font-size:11.2px;color:#444;font-weight:normal;font-family:'Liberation Sans',sans-serif;">Slide 4 of 44</div>
<div id="t69" class="tx" style="transform:scaleX(0.9962);left:113.00px;top:983px;font-size:11.2px;color:#444;font-weight:normal;font-family:'Liberation Sans',sans-serif;">Spanish (Spain)</div>
<div id="t70" class="tx" style="transform:scaleX(0.9667);left:1496.06px;top:984px;font-size:11.8px;color:#444;font-weight:normal;font-family:'Liberation Sans',sans-serif;">Notes</div>
<div id="t71" class="tx" style="transform:scaleX(0.9156);left:1849.93px;top:984px;font-size:11.8px;color:#444;font-weight:normal;font-family:'Liberation Sans',sans-serif;">142 %</div>
</body></html>
